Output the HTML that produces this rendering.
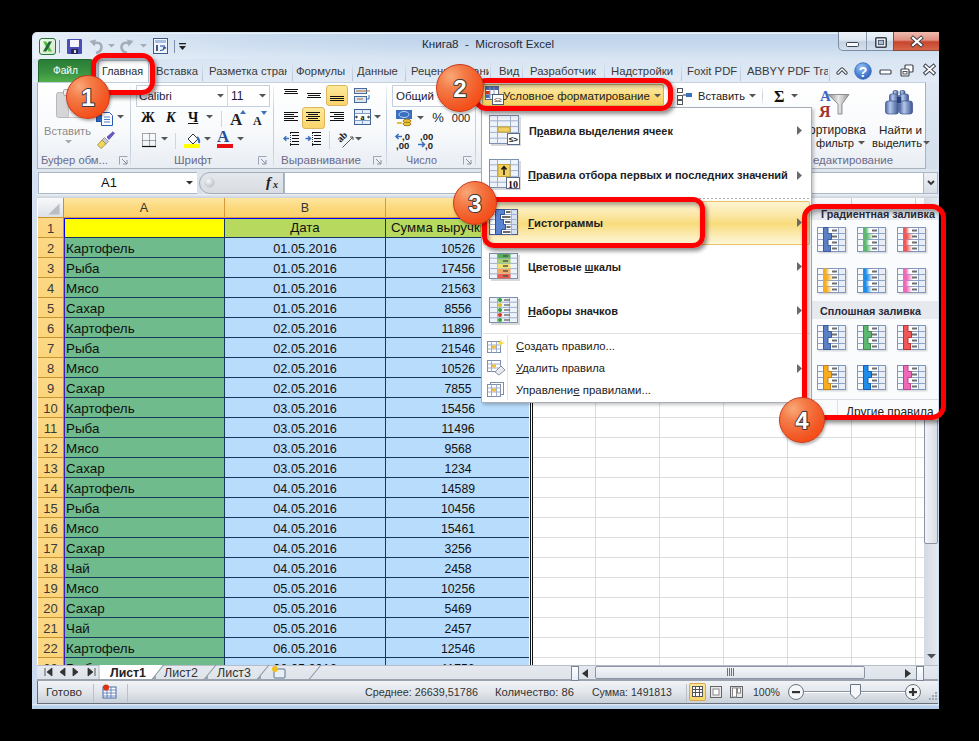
<!DOCTYPE html><html><head><meta charset="utf-8"><style>
*{margin:0;padding:0;box-sizing:border-box}
html,body{width:979px;height:741px;overflow:hidden;background:#000;font-family:"Liberation Sans",sans-serif;position:relative}
.a{position:absolute}
.t{position:absolute;white-space:nowrap;font-size:12px;color:#1e1e1e;line-height:14px}
svg{position:absolute;overflow:visible}
</style></head><body>
<div class="a" style="left:32px;top:32px;width:907px;height:677px;background:linear-gradient(#dae5f2,#d3dff0 30%,#c9d9ee);border-radius:5px 5px 0 0"></div>
<div class="a" style="left:33px;top:33px;width:905px;height:26px;background:linear-gradient(90deg,rgba(236,242,250,0.85) 0%,rgba(236,242,250,0.2) 25%,rgba(236,242,250,0) 40%,rgba(236,242,250,0) 100%),linear-gradient(#bdd3ea,#c6d9ed 45%,#d8e5f3);border-radius:4px 4px 0 0;border-top:1px solid #e8f0f8"></div>
<svg style="left:39px;top:38px" width="17" height="17" viewBox="0 0 17 17"><defs><linearGradient id="xl" x1="0" y1="0" x2="1" y2="1"><stop offset="0" stop-color="#f4fbf2"/><stop offset="1" stop-color="#cfe9c8"/></linearGradient></defs><rect x="0.5" y="0.5" width="16" height="16" rx="2.5" fill="url(#xl)" stroke="#1e7a34"/><path d="M4 3.5H7.5L13 13.5H9.5Z" fill="#5ab848"/><path d="M13 3.5H9.8L4 13.5H7.3Z" fill="#1f6a30"/></svg>
<div class="a" style="left:59px;top:40px;width:1px;height:13px;background:#8090a8"></div>
<svg style="left:67px;top:39px" width="15" height="15" viewBox="0 0 15 15"><rect x="0" y="0" width="15" height="15" rx="1" fill="#4a4fb8"/><rect x="3" y="1" width="9" height="7" fill="#f4f6fb"/><rect x="4" y="10" width="7" height="5" fill="#2a2a50"/><rect x="7" y="11" width="2" height="3" fill="#ddd"/></svg>
<svg style="left:89px;top:39px" width="14" height="15" viewBox="0 0 14 15"><path d="M4 4.5 Q12 2 12.5 8 Q12.5 12.5 7 14" stroke="#a4acb8" stroke-width="2.6" fill="none"/><path d="M0.5 2L7 0.5L5.5 7.5Z" fill="#a4acb8"/></svg>
<svg style="left:108px;top:44px" width="7" height="4" viewBox="0 0 7 4"><path d="M0 0H7L3.5 3.5Z" fill="#a4acb8"/></svg>
<svg style="left:120px;top:39px" width="14" height="15" viewBox="0 0 14 15"><path d="M10 4.5 Q2 2 1.5 8 Q1.5 12.5 7 14" stroke="#a4acb8" stroke-width="2.6" fill="none"/><path d="M13.5 2L7 0.5L8.5 7.5Z" fill="#a4acb8"/></svg>
<svg style="left:140px;top:44px" width="7" height="4" viewBox="0 0 7 4"><path d="M0 0H7L3.5 3.5Z" fill="#a4acb8"/></svg>
<svg style="left:153px;top:38px" width="15" height="16" viewBox="0 0 15 16"><rect x="0.5" y="0.5" width="14" height="15" fill="#f2f6fb" stroke="#3d5c8c"/><rect x="2" y="2" width="11" height="3" fill="#a8c0e0"/><rect x="3" y="7" width="2" height="6" fill="#3d5c8c"/><rect x="7" y="7" width="5" height="2" fill="#7d9cc8"/><path d="M7 12.5 Q11 12.5 11.5 9.5M10 10.5L11.5 9L13 10.5" stroke="#2050a0" fill="none" stroke-width="1.2"/></svg>
<div class="a" style="left:174px;top:40px;width:1px;height:13px;background:#8090a8"></div>
<svg style="left:178px;top:43px" width="9" height="9" viewBox="0 0 9 9"><rect x="1" y="0" width="7" height="1.3" fill="#222"/><path d="M1 3H8L4.5 7Z" fill="#222"/></svg>
<div class="t" style="left:422px;top:24px;height:40px;line-height:40px;font-size:11.61px;color:#1e2a3a">Книга8&nbsp; - &nbsp;Microsoft Excel</div>
<div class="a" style="left:838px;top:32px;width:101px;height:19px;border:1px solid #7d8ca3;border-top:none;border-radius:0 0 5px 5px;overflow:hidden;background:linear-gradient(#edf2f8,#dfe7f1 45%,#c3d1e2 55%,#d5e0ec)"></div>
<div class="a" style="left:866px;top:32px;width:1px;height:18px;background:#8a9ab0"></div>
<div class="a" style="left:893px;top:32px;width:46px;height:19px;background:linear-gradient(#eebcb0,#e09080 45%,#c8452c 55%,#d6664c);border-left:1px solid #8a4a3a;border-bottom:1px solid #8a4a3a"></div>
<svg style="left:846px;top:42px" width="13" height="6" viewBox="0 0 13 6"><rect x="0.5" y="0.5" width="12" height="4" rx="1" fill="#f8f9fb" stroke="#3c4350"/></svg>
<svg style="left:875px;top:37px" width="12" height="11" viewBox="0 0 12 11"><rect x="0.75" y="0.75" width="10.5" height="9.5" rx="1" fill="none" stroke="#3c4350" stroke-width="1.5"/><rect x="2.5" y="2.5" width="7" height="6" fill="none" stroke="#f8f9fb" stroke-width="1.2"/><rect x="3.3" y="3.3" width="5.4" height="4.4" fill="#a9bdd4" stroke="#3c4350" stroke-width="0.8"/></svg>
<svg style="left:910px;top:36px" width="14" height="11" viewBox="0 0 14 11"><path d="M3 2L11 9M11 2L3 9" stroke="#3a3f48" stroke-width="4" stroke-linecap="square"/><path d="M3 2L11 9M11 2L3 9" stroke="#fff" stroke-width="2.2" stroke-linecap="square"/></svg>
<div class="a" style="left:33px;top:59px;width:905px;height:23px;background:linear-gradient(#d9e5f3,#e2ebf6)"></div>
<div class="a" style="left:38px;top:59px;width:55px;height:23px;background:linear-gradient(#2a7c37,#3a9442 60%,#54b04c);border-radius:3px 3px 0 0;border:1px solid #1f6a2a;border-bottom:none"></div>
<div class="t" style="left:53px;top:51px;height:40px;line-height:40px;font-size:10.17px;color:#fff">Файл</div>
<div class="a" style="left:98px;top:60px;width:51px;height:23px;background:linear-gradient(#ffffff,#fafcfe);border:1px solid #b6c4d6;border-bottom:none;border-radius:3px 3px 0 0"></div>
<div class="t" style="left:102px;top:51px;height:40px;line-height:40px;font-size:10.77px;color:#2a2a2a">Главная</div>
<div class="a" style="left:150px;top:59px;width:680px;height:23px;overflow:hidden">
<div class="a" style="left:6px;top:0;width:45px;height:23px;overflow:hidden">
<div class="t" style="left:0;top:-8px;height:40px;line-height:40px;font-size:11.3px;color:#3a3a3a">Вставка</div>
</div>
<div class="a" style="left:52px;top:3px;width:1px;height:19px;background:linear-gradient(rgba(170,185,205,0),#b4c2d4)"></div>
<div class="a" style="left:59px;top:0;width:78px;height:23px;overflow:hidden">
<div class="t" style="left:0;top:-8px;height:40px;line-height:40px;font-size:11.3px;color:#3a3a3a">Разметка страницы</div>
</div>
<div class="a" style="left:142px;top:3px;width:1px;height:19px;background:linear-gradient(rgba(170,185,205,0),#b4c2d4)"></div>
<div class="a" style="left:146px;top:0;width:55px;height:23px;overflow:hidden">
<div class="t" style="left:0;top:-8px;height:40px;line-height:40px;font-size:11.3px;color:#3a3a3a">Формулы</div>
</div>
<div class="a" style="left:202px;top:3px;width:1px;height:19px;background:linear-gradient(rgba(170,185,205,0),#b4c2d4)"></div>
<div class="a" style="left:207px;top:0;width:47px;height:23px;overflow:hidden">
<div class="t" style="left:0;top:-8px;height:40px;line-height:40px;font-size:11.3px;color:#3a3a3a">Данные</div>
</div>
<div class="a" style="left:255px;top:3px;width:1px;height:19px;background:linear-gradient(rgba(170,185,205,0),#b4c2d4)"></div>
<div class="a" style="left:261px;top:0;width:78px;height:23px;overflow:hidden">
<div class="t" style="left:0;top:-8px;height:40px;line-height:40px;font-size:11.3px;color:#3a3a3a">Рецензирование</div>
</div>
<div class="a" style="left:340px;top:3px;width:1px;height:19px;background:linear-gradient(rgba(170,185,205,0),#b4c2d4)"></div>
<div class="a" style="left:349px;top:0;width:22px;height:23px;overflow:hidden">
<div class="t" style="left:0;top:-8px;height:40px;line-height:40px;font-size:11.3px;color:#3a3a3a">Вид</div>
</div>
<div class="a" style="left:372px;top:3px;width:1px;height:19px;background:linear-gradient(rgba(170,185,205,0),#b4c2d4)"></div>
<div class="a" style="left:380px;top:0;width:73px;height:23px;overflow:hidden">
<div class="t" style="left:0;top:-8px;height:40px;line-height:40px;font-size:11.3px;color:#3a3a3a">Разработчик</div>
</div>
<div class="a" style="left:454px;top:3px;width:1px;height:19px;background:linear-gradient(rgba(170,185,205,0),#b4c2d4)"></div>
<div class="a" style="left:461px;top:0;width:69px;height:23px;overflow:hidden">
<div class="t" style="left:0;top:-8px;height:40px;line-height:40px;font-size:11.3px;color:#3a3a3a">Надстройки</div>
</div>
<div class="a" style="left:531px;top:3px;width:1px;height:19px;background:linear-gradient(rgba(170,185,205,0),#b4c2d4)"></div>
<div class="a" style="left:537px;top:0;width:52px;height:23px;overflow:hidden">
<div class="t" style="left:0;top:-8px;height:40px;line-height:40px;font-size:11.3px;color:#3a3a3a">Foxit PDF</div>
</div>
<div class="a" style="left:590px;top:3px;width:1px;height:19px;background:linear-gradient(rgba(170,185,205,0),#b4c2d4)"></div>
<div class="a" style="left:597px;top:0;width:81px;height:23px;overflow:hidden">
<div class="t" style="left:0;top:-8px;height:40px;line-height:40px;font-size:11.3px;color:#3a3a3a">ABBYY PDF Trar</div>
</div>
<div class="a" style="left:679px;top:3px;width:1px;height:19px;background:linear-gradient(rgba(170,185,205,0),#b4c2d4)"></div>
</div>
<svg style="left:836px;top:66px" width="12" height="9" viewBox="0 0 12 9"><path d="M2 7L6 3L10 7" stroke="#404650" stroke-width="3.4" fill="none" stroke-linejoin="round" stroke-linecap="round"/><path d="M2 7L6 3L10 7" stroke="#fff" stroke-width="1.4" fill="none" stroke-linejoin="round" stroke-linecap="round"/></svg>
<svg style="left:854px;top:62px" width="18" height="18" viewBox="0 0 18 18"><defs><radialGradient id="hq" cx="0.4" cy="0.3" r="0.75"><stop offset="0" stop-color="#9cc4f4"/><stop offset="0.6" stop-color="#4a84d8"/><stop offset="1" stop-color="#2a5cb8"/></radialGradient></defs><circle cx="9" cy="9" r="8.3" fill="url(#hq)" stroke="#3a6ab8" stroke-width="0.8"/><text x="9" y="14.5" font-family="Liberation Sans" font-weight="bold" font-size="14" fill="#fff" text-anchor="middle">?</text></svg>
<svg style="left:879px;top:69px" width="13" height="6" viewBox="0 0 13 6"><rect x="1" y="1" width="11" height="4" rx="1" fill="#fff" stroke="#404650" stroke-width="1.2"/></svg>
<svg style="left:900px;top:64px" width="14" height="13" viewBox="0 0 14 13"><rect x="5" y="1" width="8" height="7" rx="1" fill="#fff" stroke="#404650" stroke-width="1.2"/><rect x="1" y="5" width="8" height="7" rx="1" fill="#fff" stroke="#404650" stroke-width="1.2"/><rect x="3" y="7.5" width="4" height="2.5" fill="none" stroke="#404650" stroke-width="0.9"/></svg>
<svg style="left:923px;top:64px" width="13" height="11" viewBox="0 0 13 11"><path d="M2.5 2L10.5 9M10.5 2L2.5 9" stroke="#404650" stroke-width="3.8" stroke-linecap="square"/><path d="M2.5 2L10.5 9M10.5 2L2.5 9" stroke="#fff" stroke-width="1.8" stroke-linecap="square"/></svg>
<div class="a" style="left:37px;top:82px;width:889px;height:87px;background:linear-gradient(#ffffff,#f8fafc 55%,#e8edf3);border:1px solid #a7b2bf;border-top:1px solid #c2d0e0"></div>
<div class="a" style="left:926px;top:82px;width:12px;height:87px;background:linear-gradient(#dfe8f3,#d4dfec)"></div>
<div class="a" style="left:130px;top:86px;width:1px;height:80px;background:linear-gradient(rgba(190,200,215,0.2),#c5d0dd 30%,#c5d0dd 80%,rgba(190,200,215,0.4))"></div>
<div class="a" style="left:273px;top:86px;width:1px;height:80px;background:linear-gradient(rgba(190,200,215,0.2),#c5d0dd 30%,#c5d0dd 80%,rgba(190,200,215,0.4))"></div>
<div class="a" style="left:386px;top:86px;width:1px;height:80px;background:linear-gradient(rgba(190,200,215,0.2),#c5d0dd 30%,#c5d0dd 80%,rgba(190,200,215,0.4))"></div>
<div class="a" style="left:475px;top:86px;width:1px;height:80px;background:linear-gradient(rgba(190,200,215,0.2),#c5d0dd 30%,#c5d0dd 80%,rgba(190,200,215,0.4))"></div>
<svg style="left:55px;top:88px" width="38" height="30" viewBox="0 0 38 30"><rect x="1.5" y="4.5" width="25" height="25" rx="2" fill="#d6d6d8" stroke="#b8b8bc"/><rect x="8.5" y="1.5" width="11" height="6" rx="1.5" fill="#ececee" stroke="#a8a8ac"/><path d="M13.5 11.5H30.5L34.5 15.5V29.5H13.5Z" fill="#f4f4f6" stroke="#c4c4c8"/><path d="M16 16H31M16 19H31M16 22H31M16 25H31" stroke="#dcdce0"/></svg>
<div class="t" style="left:44px;top:111px;height:40px;line-height:40px;font-size:11.09px;color:#8c8c8c">Вставить</div>
<svg style="left:65px;top:140px" width="7" height="4" viewBox="0 0 7 4"><path d="M0 0H7L3.5 3.5Z" fill="#a8a8a8"/></svg>
<svg style="left:96px;top:112px" width="17" height="14" viewBox="0 0 17 14"><rect x="0.5" y="3.5" width="8" height="6" fill="#2f6fd0" stroke="#1f4fa0"/><path d="M5.5 0.5H13.5L16.5 3.5V13.5H5.5Z" fill="#fff" stroke="#2a5cb0"/><path d="M8 5H14M8 7.5H14M8 10H14" stroke="#4a80d0" stroke-width="1.2"/></svg>
<svg style="left:117px;top:115px" width="7" height="4" viewBox="0 0 7 4"><path d="M0 0H7L3.5 3.5Z" fill="#555"/></svg>
<svg style="left:97px;top:131px" width="18" height="18" viewBox="0 0 18 18"><path d="M10 6L16 0.8L17.5 2.3L12 8.5Z" fill="#6a5ac8" stroke="#3a2a90" stroke-width="0.6"/><path d="M7.5 6.5L11.5 10.5L9 13L5 9Z" fill="#c8c8d8" stroke="#707080" stroke-width="0.6"/><path d="M5 9L9 13L4 17.5L0.5 14Z" fill="#f0d860" stroke="#a08828" stroke-width="0.8"/></svg>
<div class="t" style="left:41px;top:140px;height:40px;line-height:40px;font-size:11.23px;color:#6a6a8a">Буфер обм...</div>
<svg style="left:119px;top:156px" width="9" height="9" viewBox="0 0 9 9"><path d="M0.5 8.5V0.5H8.5" stroke="#9aa5b5" fill="none"/><path d="M3 3L8 8M8 4V8H4" stroke="#8590a0" fill="none"/></svg>
<div class="a" style="left:136px;top:85px;width:134px;height:22px;background:#fff;border:1px solid #c5d0de"></div>
<div class="a" style="left:227px;top:86px;width:1px;height:20px;background:#d0d8e3"></div>
<div class="t" style="left:139px;top:76px;height:40px;line-height:40px;font-size:11.64px;color:#1a1a3a">Calibri</div>
<svg style="left:217px;top:94px" width="7" height="4" viewBox="0 0 7 4"><path d="M0 0H7L3.5 3.5Z" fill="#555"/></svg>
<div class="t" style="left:231px;top:84px;height:24px;line-height:24px;font-size:12px;color:#1a1a3a">11</div>
<svg style="left:259px;top:94px" width="7" height="4" viewBox="0 0 7 4"><path d="M0 0H7L3.5 3.5Z" fill="#555"/></svg>
<div class="t" style="left:141px;top:104px;height:28px;line-height:28px;font-size:14px;font-weight:bold;font-family:'Liberation Serif';color:#111">Ж</div>
<div class="t" style="left:166px;top:104px;height:28px;line-height:28px;font-size:14px;font-weight:bold;font-style:italic;font-family:'Liberation Serif';color:#111">К</div>
<div class="t" style="left:188px;top:104px;height:28px;line-height:28px;font-size:14px;font-weight:bold;font-family:'Liberation Serif';color:#111"><u>Ч</u></div>
<svg style="left:206px;top:115px" width="7" height="4" viewBox="0 0 7 4"><path d="M0 0H7L3.5 3.5Z" fill="#555"/></svg>
<div class="a" style="left:221px;top:111px;width:1px;height:16px;background:#d0d6de"></div>
<div class="t" style="left:230px;top:103px;height:34px;line-height:34px;font-size:17px;font-weight:bold;font-family:'Liberation Serif';color:#222">A</div>
<svg style="left:240px;top:110px" width="6" height="4" viewBox="0 0 6 4"><path d="M0 4L3 0L6 4Z" fill="#3a6fc0"/></svg>
<div class="t" style="left:253px;top:109px;height:24px;line-height:24px;font-size:12px;font-weight:bold;font-family:'Liberation Serif';color:#222">A</div>
<svg style="left:261px;top:111px" width="6" height="4" viewBox="0 0 6 4"><path d="M0 0H6L3 4Z" fill="#3a6fc0"/></svg>
<svg style="left:142px;top:133px" width="14" height="14" viewBox="0 0 14 14"><path d="M0.5 0.5H13.5V13.5H0.5ZM7.5 0.5V13.5M0.5 7.5H13.5" stroke="#555" stroke-dasharray="1 1" fill="none"/><path d="M0 13.5H14" stroke="#111" stroke-width="1.2"/></svg>
<svg style="left:161px;top:137px" width="7" height="4" viewBox="0 0 7 4"><path d="M0 0H7L3.5 3.5Z" fill="#555"/></svg>
<div class="a" style="left:175px;top:133px;width:1px;height:16px;background:#d0d6de"></div>
<svg style="left:184px;top:132px" width="17" height="17" viewBox="0 0 17 17"><path d="M4 7L9 2L14 7L9 12Z" fill="#fff" stroke="#333"/><path d="M13 5Q16 8 15 11" stroke="#3a6fc0" stroke-width="2" fill="none"/><rect x="0" y="12" width="16" height="4" fill="#ffff00"/></svg>
<svg style="left:204px;top:137px" width="7" height="4" viewBox="0 0 7 4"><path d="M0 0H7L3.5 3.5Z" fill="#555"/></svg>
<div class="t" style="left:217px;top:120px;height:34px;line-height:34px;font-size:17px;font-weight:bold;font-family:'Liberation Serif';color:#2050a0">A</div>
<div class="a" style="left:217px;top:144px;width:16px;height:4px;background:#e81010"></div>
<svg style="left:237px;top:137px" width="7" height="4" viewBox="0 0 7 4"><path d="M0 0H7L3.5 3.5Z" fill="#555"/></svg>
<div class="t" style="left:174px;top:140px;height:40px;line-height:40px;font-size:11.55px;color:#6a6a8a">Шрифт</div>
<svg style="left:258px;top:156px" width="9" height="9" viewBox="0 0 9 9"><path d="M0.5 8.5V0.5H8.5" stroke="#9aa5b5" fill="none"/><path d="M3 3L8 8M8 4V8H4" stroke="#8590a0" fill="none"/></svg>
<svg style="left:284px;top:89px" width="15" height="6" viewBox="0 0 15 6"><rect x="0" y="0" width="14" height="1" fill="#111"/><rect x="1" y="2" width="12" height="1" fill="#111"/><rect x="0" y="4" width="14" height="1" fill="#111"/></svg>
<svg style="left:307px;top:93px" width="15" height="6" viewBox="0 0 15 6"><rect x="0" y="0" width="14" height="1" fill="#111"/><rect x="1" y="2" width="12" height="1" fill="#111"/><rect x="0" y="4" width="14" height="1" fill="#111"/></svg>
<div class="a" style="left:326px;top:85px;width:22px;height:21px;background:linear-gradient(#fde99a,#fbd46c);border:1px solid #dcb55c;border-radius:3px"></div>
<svg style="left:330px;top:96px" width="15" height="6" viewBox="0 0 15 6"><rect x="0" y="0" width="14" height="1" fill="#111"/><rect x="0" y="2" width="14" height="1" fill="#111"/><rect x="0" y="4" width="14" height="1" fill="#111"/></svg>
<svg style="left:354px;top:88px" width="17" height="16" viewBox="0 0 17 16"><rect x="0.5" y="0.5" width="12" height="5" fill="#dbe6f4" stroke="#4a6a9a"/><rect x="0.5" y="8.5" width="12" height="6" fill="#dbe6f4" stroke="#4a6a9a"/><path d="M2 3H16M3 11H9" stroke="#a86a30"/><path d="M15 7V11H12" stroke="#3a6fc0" fill="none"/></svg>
<svg style="left:284px;top:112px" width="15" height="10" viewBox="0 0 15 10"><rect x="0" y="0" width="14" height="1" fill="#111"/><rect x="0" y="2" width="10" height="1" fill="#111"/><rect x="0" y="4" width="14" height="1" fill="#111"/><rect x="0" y="6" width="10" height="1" fill="#111"/><rect x="0" y="8" width="14" height="1" fill="#111"/></svg>
<div class="a" style="left:302px;top:107px;width:23px;height:22px;background:linear-gradient(#fde99a,#fbd46c);border:1px solid #dcb55c;border-radius:3px"></div>
<svg style="left:306px;top:112px" width="15" height="10" viewBox="0 0 15 10"><rect x="0" y="0" width="14" height="1" fill="#111"/><rect x="2" y="2" width="10" height="1" fill="#111"/><rect x="0" y="4" width="14" height="1" fill="#111"/><rect x="2" y="6" width="10" height="1" fill="#111"/><rect x="0" y="8" width="14" height="1" fill="#111"/></svg>
<svg style="left:330px;top:112px" width="15" height="10" viewBox="0 0 15 10"><rect x="0" y="0" width="14" height="1" fill="#111"/><rect x="4" y="2" width="10" height="1" fill="#111"/><rect x="0" y="4" width="14" height="1" fill="#111"/><rect x="4" y="6" width="10" height="1" fill="#111"/><rect x="0" y="8" width="14" height="1" fill="#111"/></svg>
<svg style="left:354px;top:109px" width="17" height="16" viewBox="0 0 17 16"><rect x="0.5" y="0.5" width="16" height="15" fill="#e6eef8" stroke="#3f5f92"/><path d="M0.5 4.5H16.5M0.5 11.5H16.5M8.5 0.5V4.5M8.5 11.5V15.5" stroke="#7f9cc8"/><rect x="1" y="5" width="15" height="6" fill="#fff"/><text x="8.5" y="10.5" font-size="8" font-weight="bold" text-anchor="middle" font-family="Liberation Serif" fill="#111">a</text><path d="M1.5 8H4M3 6.8L1.5 8L3 9.2M15.5 8H13M14 6.8L15.5 8L14 9.2" stroke="#222" stroke-width="0.9" fill="none"/></svg>
<svg style="left:374px;top:115px" width="7" height="4" viewBox="0 0 7 4"><path d="M0 0H7L3.5 3.5Z" fill="#555"/></svg>
<svg style="left:283px;top:132px" width="17" height="15" viewBox="0 0 17 15"><path d="M7 0.5H16M9 3.5H16M9 6.5H16M9 9.5H16M7 12.5H16" stroke="#111"/><path d="M7.5 1V14" stroke="#333" stroke-dasharray="1 1"/><path d="M1 6.5H6M3.3 4.3L1 6.5L3.3 8.7" stroke="#3a6fc0" stroke-width="1.4" fill="none"/></svg>
<svg style="left:305px;top:132px" width="17" height="15" viewBox="0 0 17 15"><path d="M7 0.5H16M9 3.5H16M9 6.5H16M9 9.5H16M7 12.5H16" stroke="#111"/><path d="M7.5 1V14" stroke="#333" stroke-dasharray="1 1"/><path d="M0.5 6.5H5.5M3.2 4.3L5.5 6.5L3.2 8.7" stroke="#3a6fc0" stroke-width="1.4" fill="none"/></svg>
<div class="a" style="left:329px;top:131px;width:1px;height:18px;background:#d0d6de"></div>
<svg style="left:337px;top:131px" width="20" height="18" viewBox="0 0 20 18"><text x="0" y="0" font-size="10" font-family="Liberation Serif" font-weight="bold" transform="translate(3.5 12) rotate(-45)" fill="#222">ab</text><path d="M5.5 16.5L16 6M13 6H16V9" stroke="#555" fill="none" stroke-width="1"/></svg>
<svg style="left:355px;top:137px" width="7" height="4" viewBox="0 0 7 4"><path d="M0 0H7L3.5 3.5Z" fill="#555"/></svg>
<div class="t" style="left:281px;top:140px;height:40px;line-height:40px;font-size:11.62px;color:#6a6a8a">Выравнивание</div>
<svg style="left:373px;top:156px" width="9" height="9" viewBox="0 0 9 9"><path d="M0.5 8.5V0.5H8.5" stroke="#9aa5b5" fill="none"/><path d="M3 3L8 8M8 4V8H4" stroke="#8590a0" fill="none"/></svg>
<div class="a" style="left:392px;top:85px;width:88px;height:22px;background:#fff;border:1px solid #c5d0de"></div>
<div class="t" style="left:396px;top:76px;height:40px;line-height:40px;font-size:11.55px;color:#1a1a3a">Общий</div>
<svg style="left:396px;top:110px" width="17" height="17" viewBox="0 0 17 17"><rect x="0" y="0" width="16" height="9" fill="#3a6fc0"/><ellipse cx="8" cy="4.5" rx="5" ry="3" fill="none" stroke="#c0d8f0"/><ellipse cx="11" cy="11" rx="4" ry="1.8" fill="#e8c030" stroke="#a08020"/><ellipse cx="11" cy="14" rx="4" ry="1.8" fill="#e8c030" stroke="#a08020"/><rect x="1" y="12" width="5" height="2" fill="#e8c030"/></svg>
<svg style="left:417px;top:116px" width="7" height="4" viewBox="0 0 7 4"><path d="M0 0H7L3.5 3.5Z" fill="#555"/></svg>
<div class="t" style="left:238px;top:105px;width:400px;height:26px;line-height:26px;text-align:center;font-size:13px;color:#222">%</div>
<div class="t" style="left:261px;top:107px;width:400px;height:22px;line-height:22px;text-align:center;font-size:11px;color:#222">000</div>
<svg style="left:395px;top:132px" width="42" height="18" viewBox="0 0 42 18"><g font-size="9.5" font-weight="bold" font-family="Liberation Sans" fill="#222"><text x="7" y="8">,0</text><text x="1" y="16.5">,00</text><text x="25" y="8">,00</text><text x="30" y="16.5">,0</text></g><path d="M1 4.5H7M3.5 2L1 4.5L3.5 7" stroke="#3a6fc0" stroke-width="1.6" fill="none"/><path d="M23 12.5H29.5M27 10L29.5 12.5L27 15" stroke="#3a6fc0" stroke-width="1.6" fill="none"/></svg>
<div class="t" style="left:406px;top:140px;height:40px;line-height:40px;font-size:10.78px;color:#6a6a8a">Число</div>
<svg style="left:463px;top:156px" width="9" height="9" viewBox="0 0 9 9"><path d="M0.5 8.5V0.5H8.5" stroke="#9aa5b5" fill="none"/><path d="M3 3L8 8M8 4V8H4" stroke="#8590a0" fill="none"/></svg>
<svg style="left:677px;top:88px" width="16" height="18" viewBox="0 0 16 18"><rect x="0.5" y="0.5" width="5" height="4" fill="#fff" stroke="#555"/><rect x="0.5" y="7.5" width="5" height="4" fill="#fff" stroke="#555"/><rect x="0.5" y="12.5" width="5" height="4" fill="#fff" stroke="#555"/><rect x="9" y="5" width="6" height="4" fill="#3a6fc0"/><path d="M6 7H9" stroke="#333"/></svg>
<div class="t" style="left:698px;top:76px;height:40px;line-height:40px;font-size:11.09px;color:#222">Вставить</div>
<svg style="left:749px;top:94px" width="7" height="4" viewBox="0 0 7 4"><path d="M0 0H7L3.5 3.5Z" fill="#555"/></svg>
<div class="t" style="left:774px;top:81px;height:32px;line-height:32px;font-size:16px;font-weight:bold;font-family:'Liberation Serif';color:#111">Σ</div>
<div class="a" style="left:762px;top:86px;width:1px;height:20px;background:linear-gradient(rgba(200,208,218,0),#cdd4de 40%,#cdd4de 60%,rgba(200,208,218,0))"></div>
<svg style="left:791px;top:94px" width="7" height="4" viewBox="0 0 7 4"><path d="M0 0H7L3.5 3.5Z" fill="#555"/></svg>
<svg style="left:818px;top:88px" width="34" height="30" viewBox="0 0 34 30"><defs><linearGradient id="fun" x1="0" x2="1"><stop offset="0" stop-color="#8a8a8a"/><stop offset="0.5" stop-color="#e8e8e8"/><stop offset="1" stop-color="#9a9a9a"/></linearGradient></defs><path d="M10 6.5H31L24 16V26H20V16Z" fill="url(#fun)" stroke="#7a7a7a" stroke-width="0.8"/><text x="2" y="13" font-family="Liberation Serif" font-weight="bold" font-size="15" fill="#3a66c8">A</text><text x="1" y="29" font-family="Liberation Serif" font-weight="bold" font-size="16" fill="#a0342a">Я</text></svg>
<div class="t" style="left:809px;top:110px;height:40px;line-height:40px;font-size:11.96px;color:#222">ортировка</div>
<div class="t" style="left:816px;top:123px;height:40px;line-height:40px;font-size:11.11px;color:#222">фильтр</div>
<svg style="left:858px;top:141px" width="7" height="4" viewBox="0 0 7 4"><path d="M0 0H7L3.5 3.5Z" fill="#555"/></svg>
<svg style="left:885px;top:90px" width="29" height="25" viewBox="0 0 29 25"><defs><linearGradient id="bino" x1="0" x2="1"><stop offset="0" stop-color="#4a66a0"/><stop offset="0.35" stop-color="#b4c8ec"/><stop offset="1" stop-color="#3a5490"/></linearGradient></defs><g fill="url(#bino)" stroke="#3a5088" stroke-width="0.7"><rect x="8" y="0.5" width="5" height="4" rx="1.5"/><rect x="15" y="0.5" width="5" height="4" rx="1.5"/><rect x="4.5" y="4" width="9" height="8" rx="2"/><rect x="14.5" y="4" width="9" height="8" rx="2"/><rect x="0.5" y="11" width="13" height="13" rx="2.5"/><rect x="14.5" y="11" width="13" height="13" rx="2.5"/></g><rect x="12" y="7" width="4" height="6" fill="#2a4078"/></svg>
<div class="t" style="left:879px;top:110px;height:40px;line-height:40px;font-size:11.65px;color:#222">Найти и</div>
<div class="t" style="left:872px;top:123px;height:40px;line-height:40px;font-size:11.17px;color:#222">выделить</div>
<svg style="left:923px;top:141px" width="7" height="4" viewBox="0 0 7 4"><path d="M0 0H7L3.5 3.5Z" fill="#555"/></svg>
<div class="t" style="left:813px;top:140px;height:40px;line-height:40px;font-size:11.44px;color:#6a6a8a">едактирование</div>
<div class="a" style="left:37px;top:169px;width:901px;height:29px;background:linear-gradient(#dfe5ec,#d8dfe8)"></div>
<div class="a" style="left:38px;top:172px;width:159px;height:22px;background:#fff;border:1px solid #a9b7c8;border-right:none"></div>
<div class="t" style="left:-91px;top:170px;width:400px;height:26px;line-height:26px;text-align:center;font-size:13px;color:#111">A1</div>
<svg style="left:186px;top:181px" width="7" height="4" viewBox="0 0 7 4"><path d="M0 0H7L3.5 3.5Z" fill="#333"/></svg>
<div class="a" style="left:199px;top:172px;width:85px;height:22px;background:linear-gradient(#e4e7eb,#d9dde2);border:1px solid #a3acb8;border-radius:11px 0 0 11px"></div>
<svg style="left:204px;top:177px" width="11" height="11" viewBox="0 0 11 11"><defs><radialGradient id="fcirc" cx="0.4" cy="0.35" r="0.7"><stop offset="0" stop-color="#f8f9fa"/><stop offset="1" stop-color="#b9bec6"/></radialGradient></defs><circle cx="5.5" cy="5.5" r="5" fill="url(#fcirc)"/></svg>
<svg style="left:265px;top:175px" width="18" height="16" viewBox="0 0 18 16"><text x="1" y="12" font-family="Liberation Serif" font-style="italic" font-weight="bold" font-size="15" fill="#222">f</text><text x="8" y="13" font-family="Liberation Serif" font-style="italic" font-weight="bold" font-size="10" fill="#222">x</text></svg>
<div class="a" style="left:284px;top:172px;width:640px;height:22px;background:#fff;border:1px solid #a9b7c8"></div>
<div class="a" style="left:924px;top:172px;width:14px;height:22px;background:linear-gradient(#eef2f6,#d8dee6);border:1px solid #a9b7c8;border-left:none"></div>
<svg style="left:927px;top:180px" width="8" height="6" viewBox="0 0 8 6"><path d="M1 1L4 4L7 1" stroke="#333" stroke-width="1.8" fill="none"/></svg>
<div class="a" style="left:37px;top:194px;width:901px;height:4px;background:linear-gradient(#eef1f5,#c9d1db)"></div>
<div class="a" style="left:37px;top:198px;width:887px;height:467px;background:#fff"></div>
<div class="a" style="left:38px;top:198px;width:26px;height:20px;background:linear-gradient(#f8f9fa,#dde1e6);border-right:1px solid #c8922e;border-bottom:1px solid #c8922e"></div>
<svg style="left:48px;top:203px" width="12" height="12" viewBox="0 0 12 12"><path d="M11.5 0.5V11.5H0.5Z" fill="#b9bec5"/></svg>
<div class="a" style="left:64px;top:198px;width:161px;height:20px;background:linear-gradient(#fde6a0,#fcd97e 50%,#fbd06a);border-right:1px solid #d49a3c;border-bottom:1px solid #d49a3c"></div>
<div class="t" style="left:-56px;top:188px;width:400px;height:40px;line-height:40px;text-align:center;font-size:12.5px;color:#333">A</div>
<div class="a" style="left:225px;top:198px;width:161px;height:20px;background:linear-gradient(#fde6a0,#fcd97e 50%,#fbd06a);border-right:1px solid #d49a3c;border-bottom:1px solid #d49a3c"></div>
<div class="t" style="left:105px;top:188px;width:400px;height:40px;line-height:40px;text-align:center;font-size:12.5px;color:#333">B</div>
<div class="a" style="left:386px;top:198px;width:147px;height:20px;background:linear-gradient(#fde6a0,#fcd97e 50%,#fbd06a);border-right:1px solid #d49a3c;border-bottom:1px solid #d49a3c"></div>
<div class="t" style="left:259px;top:188px;width:400px;height:40px;line-height:40px;text-align:center;font-size:12.5px;color:#333">C</div>
<div class="a" style="left:533px;top:198px;width:63px;height:20px;background:linear-gradient(#f9fafb,#e4e7eb);border-right:1px solid #c5cbd3;border-bottom:1px solid #c5cbd3"></div>
<div class="a" style="left:596px;top:198px;width:64px;height:20px;background:linear-gradient(#f9fafb,#e4e7eb);border-right:1px solid #c5cbd3;border-bottom:1px solid #c5cbd3"></div>
<div class="a" style="left:660px;top:198px;width:64px;height:20px;background:linear-gradient(#f9fafb,#e4e7eb);border-right:1px solid #c5cbd3;border-bottom:1px solid #c5cbd3"></div>
<div class="a" style="left:724px;top:198px;width:64px;height:20px;background:linear-gradient(#f9fafb,#e4e7eb);border-right:1px solid #c5cbd3;border-bottom:1px solid #c5cbd3"></div>
<div class="a" style="left:788px;top:198px;width:64px;height:20px;background:linear-gradient(#f9fafb,#e4e7eb);border-right:1px solid #c5cbd3;border-bottom:1px solid #c5cbd3"></div>
<div class="a" style="left:852px;top:198px;width:64px;height:20px;background:linear-gradient(#f9fafb,#e4e7eb);border-right:1px solid #c5cbd3;border-bottom:1px solid #c5cbd3"></div>
<div class="a" style="left:916px;top:198px;width:9px;height:20px;background:linear-gradient(#f9fafb,#e4e7eb);border-right:1px solid #c5cbd3;border-bottom:1px solid #c5cbd3"></div>
<div class="a" style="left:0;top:0;width:979px;height:665px;overflow:hidden">
<div class="a" style="left:38px;top:218px;width:26px;height:20px;background:linear-gradient(#fdd986,#fcd47a);border-right:1px solid #c8922e;border-bottom:1px solid #c8922e"><div class="t" style="left:0;top:0;width:25px;height:19px;line-height:22px;text-align:center;font-size:13px;color:#3a3a3a">1</div></div>
<div class="a" style="left:38px;top:238px;width:26px;height:20px;background:linear-gradient(#fdd986,#fcd47a);border-right:1px solid #c8922e;border-bottom:1px solid #c8922e"><div class="t" style="left:0;top:0;width:25px;height:19px;line-height:22px;text-align:center;font-size:13px;color:#3a3a3a">2</div></div>
<div class="a" style="left:38px;top:258px;width:26px;height:20px;background:linear-gradient(#fdd986,#fcd47a);border-right:1px solid #c8922e;border-bottom:1px solid #c8922e"><div class="t" style="left:0;top:0;width:25px;height:19px;line-height:22px;text-align:center;font-size:13px;color:#3a3a3a">3</div></div>
<div class="a" style="left:38px;top:278px;width:26px;height:20px;background:linear-gradient(#fdd986,#fcd47a);border-right:1px solid #c8922e;border-bottom:1px solid #c8922e"><div class="t" style="left:0;top:0;width:25px;height:19px;line-height:22px;text-align:center;font-size:13px;color:#3a3a3a">4</div></div>
<div class="a" style="left:38px;top:298px;width:26px;height:20px;background:linear-gradient(#fdd986,#fcd47a);border-right:1px solid #c8922e;border-bottom:1px solid #c8922e"><div class="t" style="left:0;top:0;width:25px;height:19px;line-height:22px;text-align:center;font-size:13px;color:#3a3a3a">5</div></div>
<div class="a" style="left:38px;top:318px;width:26px;height:20px;background:linear-gradient(#fdd986,#fcd47a);border-right:1px solid #c8922e;border-bottom:1px solid #c8922e"><div class="t" style="left:0;top:0;width:25px;height:19px;line-height:22px;text-align:center;font-size:13px;color:#3a3a3a">6</div></div>
<div class="a" style="left:38px;top:338px;width:26px;height:20px;background:linear-gradient(#fdd986,#fcd47a);border-right:1px solid #c8922e;border-bottom:1px solid #c8922e"><div class="t" style="left:0;top:0;width:25px;height:19px;line-height:22px;text-align:center;font-size:13px;color:#3a3a3a">7</div></div>
<div class="a" style="left:38px;top:358px;width:26px;height:20px;background:linear-gradient(#fdd986,#fcd47a);border-right:1px solid #c8922e;border-bottom:1px solid #c8922e"><div class="t" style="left:0;top:0;width:25px;height:19px;line-height:22px;text-align:center;font-size:13px;color:#3a3a3a">8</div></div>
<div class="a" style="left:38px;top:378px;width:26px;height:20px;background:linear-gradient(#fdd986,#fcd47a);border-right:1px solid #c8922e;border-bottom:1px solid #c8922e"><div class="t" style="left:0;top:0;width:25px;height:19px;line-height:22px;text-align:center;font-size:13px;color:#3a3a3a">9</div></div>
<div class="a" style="left:38px;top:398px;width:26px;height:20px;background:linear-gradient(#fdd986,#fcd47a);border-right:1px solid #c8922e;border-bottom:1px solid #c8922e"><div class="t" style="left:0;top:0;width:25px;height:19px;line-height:22px;text-align:center;font-size:13px;color:#3a3a3a">10</div></div>
<div class="a" style="left:38px;top:418px;width:26px;height:20px;background:linear-gradient(#fdd986,#fcd47a);border-right:1px solid #c8922e;border-bottom:1px solid #c8922e"><div class="t" style="left:0;top:0;width:25px;height:19px;line-height:22px;text-align:center;font-size:13px;color:#3a3a3a">11</div></div>
<div class="a" style="left:38px;top:438px;width:26px;height:20px;background:linear-gradient(#fdd986,#fcd47a);border-right:1px solid #c8922e;border-bottom:1px solid #c8922e"><div class="t" style="left:0;top:0;width:25px;height:19px;line-height:22px;text-align:center;font-size:13px;color:#3a3a3a">12</div></div>
<div class="a" style="left:38px;top:458px;width:26px;height:20px;background:linear-gradient(#fdd986,#fcd47a);border-right:1px solid #c8922e;border-bottom:1px solid #c8922e"><div class="t" style="left:0;top:0;width:25px;height:19px;line-height:22px;text-align:center;font-size:13px;color:#3a3a3a">13</div></div>
<div class="a" style="left:38px;top:478px;width:26px;height:20px;background:linear-gradient(#fdd986,#fcd47a);border-right:1px solid #c8922e;border-bottom:1px solid #c8922e"><div class="t" style="left:0;top:0;width:25px;height:19px;line-height:22px;text-align:center;font-size:13px;color:#3a3a3a">14</div></div>
<div class="a" style="left:38px;top:498px;width:26px;height:20px;background:linear-gradient(#fdd986,#fcd47a);border-right:1px solid #c8922e;border-bottom:1px solid #c8922e"><div class="t" style="left:0;top:0;width:25px;height:19px;line-height:22px;text-align:center;font-size:13px;color:#3a3a3a">15</div></div>
<div class="a" style="left:38px;top:518px;width:26px;height:20px;background:linear-gradient(#fdd986,#fcd47a);border-right:1px solid #c8922e;border-bottom:1px solid #c8922e"><div class="t" style="left:0;top:0;width:25px;height:19px;line-height:22px;text-align:center;font-size:13px;color:#3a3a3a">16</div></div>
<div class="a" style="left:38px;top:538px;width:26px;height:20px;background:linear-gradient(#fdd986,#fcd47a);border-right:1px solid #c8922e;border-bottom:1px solid #c8922e"><div class="t" style="left:0;top:0;width:25px;height:19px;line-height:22px;text-align:center;font-size:13px;color:#3a3a3a">17</div></div>
<div class="a" style="left:38px;top:558px;width:26px;height:20px;background:linear-gradient(#fdd986,#fcd47a);border-right:1px solid #c8922e;border-bottom:1px solid #c8922e"><div class="t" style="left:0;top:0;width:25px;height:19px;line-height:22px;text-align:center;font-size:13px;color:#3a3a3a">18</div></div>
<div class="a" style="left:38px;top:578px;width:26px;height:20px;background:linear-gradient(#fdd986,#fcd47a);border-right:1px solid #c8922e;border-bottom:1px solid #c8922e"><div class="t" style="left:0;top:0;width:25px;height:19px;line-height:22px;text-align:center;font-size:13px;color:#3a3a3a">19</div></div>
<div class="a" style="left:38px;top:598px;width:26px;height:20px;background:linear-gradient(#fdd986,#fcd47a);border-right:1px solid #c8922e;border-bottom:1px solid #c8922e"><div class="t" style="left:0;top:0;width:25px;height:19px;line-height:22px;text-align:center;font-size:13px;color:#3a3a3a">20</div></div>
<div class="a" style="left:38px;top:618px;width:26px;height:20px;background:linear-gradient(#fdd986,#fcd47a);border-right:1px solid #c8922e;border-bottom:1px solid #c8922e"><div class="t" style="left:0;top:0;width:25px;height:19px;line-height:22px;text-align:center;font-size:13px;color:#3a3a3a">21</div></div>
<div class="a" style="left:38px;top:638px;width:26px;height:20px;background:linear-gradient(#fdd986,#fcd47a);border-right:1px solid #c8922e;border-bottom:1px solid #c8922e"><div class="t" style="left:0;top:0;width:25px;height:19px;line-height:22px;text-align:center;font-size:13px;color:#3a3a3a">22</div></div>
<div class="a" style="left:38px;top:658px;width:26px;height:20px;background:linear-gradient(#fdd986,#fcd47a);border-right:1px solid #c8922e;border-bottom:1px solid #c8922e"><div class="t" style="left:0;top:0;width:25px;height:19px;line-height:22px;text-align:center;font-size:13px;color:#3a3a3a">23</div></div>
<div class="a" style="left:64px;top:218px;width:161px;height:447px;background:#70bb8c"></div>
<div class="a" style="left:225px;top:218px;width:304px;height:447px;background:#b8dcfc"></div>
<div class="a" style="left:64px;top:218px;width:161px;height:20px;background:#ffff00"></div>
<div class="a" style="left:225px;top:218px;width:304px;height:20px;background:#b7d95e"></div>
<div class="a" style="left:595px;top:218px;width:1px;height:447px;background:#dadcdd"></div>
<div class="a" style="left:659px;top:218px;width:1px;height:447px;background:#dadcdd"></div>
<div class="a" style="left:723px;top:218px;width:1px;height:447px;background:#dadcdd"></div>
<div class="a" style="left:787px;top:218px;width:1px;height:447px;background:#dadcdd"></div>
<div class="a" style="left:851px;top:218px;width:1px;height:447px;background:#dadcdd"></div>
<div class="a" style="left:915px;top:218px;width:1px;height:447px;background:#dadcdd"></div>
<div class="a" style="left:533px;top:237px;width:391px;height:1px;background:#dadcdd"></div>
<div class="a" style="left:533px;top:257px;width:391px;height:1px;background:#dadcdd"></div>
<div class="a" style="left:533px;top:277px;width:391px;height:1px;background:#dadcdd"></div>
<div class="a" style="left:533px;top:297px;width:391px;height:1px;background:#dadcdd"></div>
<div class="a" style="left:533px;top:317px;width:391px;height:1px;background:#dadcdd"></div>
<div class="a" style="left:533px;top:337px;width:391px;height:1px;background:#dadcdd"></div>
<div class="a" style="left:533px;top:357px;width:391px;height:1px;background:#dadcdd"></div>
<div class="a" style="left:533px;top:377px;width:391px;height:1px;background:#dadcdd"></div>
<div class="a" style="left:533px;top:397px;width:391px;height:1px;background:#dadcdd"></div>
<div class="a" style="left:533px;top:417px;width:391px;height:1px;background:#dadcdd"></div>
<div class="a" style="left:533px;top:437px;width:391px;height:1px;background:#dadcdd"></div>
<div class="a" style="left:533px;top:457px;width:391px;height:1px;background:#dadcdd"></div>
<div class="a" style="left:533px;top:477px;width:391px;height:1px;background:#dadcdd"></div>
<div class="a" style="left:533px;top:497px;width:391px;height:1px;background:#dadcdd"></div>
<div class="a" style="left:533px;top:517px;width:391px;height:1px;background:#dadcdd"></div>
<div class="a" style="left:533px;top:537px;width:391px;height:1px;background:#dadcdd"></div>
<div class="a" style="left:533px;top:557px;width:391px;height:1px;background:#dadcdd"></div>
<div class="a" style="left:533px;top:577px;width:391px;height:1px;background:#dadcdd"></div>
<div class="a" style="left:533px;top:597px;width:391px;height:1px;background:#dadcdd"></div>
<div class="a" style="left:533px;top:617px;width:391px;height:1px;background:#dadcdd"></div>
<div class="a" style="left:533px;top:637px;width:391px;height:1px;background:#dadcdd"></div>
<div class="a" style="left:533px;top:657px;width:391px;height:1px;background:#dadcdd"></div>
<div class="a" style="left:64px;top:237px;width:465px;height:1px;background:#17375e"></div>
<div class="a" style="left:64px;top:257px;width:465px;height:1px;background:#17375e"></div>
<div class="a" style="left:64px;top:277px;width:465px;height:1px;background:#17375e"></div>
<div class="a" style="left:64px;top:297px;width:465px;height:1px;background:#17375e"></div>
<div class="a" style="left:64px;top:317px;width:465px;height:1px;background:#17375e"></div>
<div class="a" style="left:64px;top:337px;width:465px;height:1px;background:#17375e"></div>
<div class="a" style="left:64px;top:357px;width:465px;height:1px;background:#17375e"></div>
<div class="a" style="left:64px;top:377px;width:465px;height:1px;background:#17375e"></div>
<div class="a" style="left:64px;top:397px;width:465px;height:1px;background:#17375e"></div>
<div class="a" style="left:64px;top:417px;width:465px;height:1px;background:#17375e"></div>
<div class="a" style="left:64px;top:437px;width:465px;height:1px;background:#17375e"></div>
<div class="a" style="left:64px;top:457px;width:465px;height:1px;background:#17375e"></div>
<div class="a" style="left:64px;top:477px;width:465px;height:1px;background:#17375e"></div>
<div class="a" style="left:64px;top:497px;width:465px;height:1px;background:#17375e"></div>
<div class="a" style="left:64px;top:517px;width:465px;height:1px;background:#17375e"></div>
<div class="a" style="left:64px;top:537px;width:465px;height:1px;background:#17375e"></div>
<div class="a" style="left:64px;top:557px;width:465px;height:1px;background:#17375e"></div>
<div class="a" style="left:64px;top:577px;width:465px;height:1px;background:#17375e"></div>
<div class="a" style="left:64px;top:597px;width:465px;height:1px;background:#17375e"></div>
<div class="a" style="left:64px;top:617px;width:465px;height:1px;background:#17375e"></div>
<div class="a" style="left:64px;top:637px;width:465px;height:1px;background:#17375e"></div>
<div class="a" style="left:64px;top:657px;width:465px;height:1px;background:#17375e"></div>
<div class="a" style="left:224px;top:218px;width:1px;height:447px;background:#17375e"></div>
<div class="a" style="left:385px;top:218px;width:1px;height:447px;background:#17375e"></div>
<div class="a" style="left:64px;top:218px;width:465px;height:1px;background:#0000ff"></div>
<div class="a" style="left:64px;top:218px;width:1px;height:447px;background:#3a20c0"></div>
<div class="a" style="left:64px;top:219px;width:1px;height:18px;background:#0000ff"></div>
<div class="a" style="left:529px;top:218px;width:1px;height:447px;background:#fff"></div>
<div class="a" style="left:530px;top:217px;width:1px;height:448px;background:#111"></div>
<div class="a" style="left:531px;top:217px;width:1px;height:448px;background:#fff"></div>
<div class="a" style="left:532px;top:217px;width:1px;height:448px;background:#111"></div>
<div class="t" style="left:105px;top:208px;width:400px;height:40px;line-height:40px;text-align:center;font-size:13.3px;color:#111">Дата</div>
<div class="t" style="left:391px;top:208px;width:138px;height:40px;line-height:40px;overflow:hidden;font-size:13.3px;color:#111">Сумма выручки</div>
<div class="t" style="left:66px;top:229px;height:40px;line-height:40px;font-size:13.4px;color:#111">Картофель</div>
<div class="t" style="left:105px;top:229px;width:400px;height:40px;line-height:40px;text-align:center;font-size:12.7px;color:#111">01.05.2016</div>
<div class="t" style="left:258px;top:229px;width:400px;height:40px;line-height:40px;text-align:center;font-size:12.2px;color:#111">10526</div>
<div class="t" style="left:66px;top:249px;height:40px;line-height:40px;font-size:13.4px;color:#111">Рыба</div>
<div class="t" style="left:105px;top:249px;width:400px;height:40px;line-height:40px;text-align:center;font-size:12.7px;color:#111">01.05.2016</div>
<div class="t" style="left:258px;top:249px;width:400px;height:40px;line-height:40px;text-align:center;font-size:12.2px;color:#111">17456</div>
<div class="t" style="left:66px;top:269px;height:40px;line-height:40px;font-size:13.4px;color:#111">Мясо</div>
<div class="t" style="left:105px;top:269px;width:400px;height:40px;line-height:40px;text-align:center;font-size:12.7px;color:#111">01.05.2016</div>
<div class="t" style="left:258px;top:269px;width:400px;height:40px;line-height:40px;text-align:center;font-size:12.2px;color:#111">21563</div>
<div class="t" style="left:66px;top:289px;height:40px;line-height:40px;font-size:13.4px;color:#111">Сахар</div>
<div class="t" style="left:105px;top:289px;width:400px;height:40px;line-height:40px;text-align:center;font-size:12.7px;color:#111">01.05.2016</div>
<div class="t" style="left:258px;top:289px;width:400px;height:40px;line-height:40px;text-align:center;font-size:12.2px;color:#111">8556</div>
<div class="t" style="left:66px;top:309px;height:40px;line-height:40px;font-size:13.4px;color:#111">Картофель</div>
<div class="t" style="left:105px;top:309px;width:400px;height:40px;line-height:40px;text-align:center;font-size:12.7px;color:#111">02.05.2016</div>
<div class="t" style="left:258px;top:309px;width:400px;height:40px;line-height:40px;text-align:center;font-size:12.2px;color:#111">11896</div>
<div class="t" style="left:66px;top:329px;height:40px;line-height:40px;font-size:13.4px;color:#111">Рыба</div>
<div class="t" style="left:105px;top:329px;width:400px;height:40px;line-height:40px;text-align:center;font-size:12.7px;color:#111">02.05.2016</div>
<div class="t" style="left:258px;top:329px;width:400px;height:40px;line-height:40px;text-align:center;font-size:12.2px;color:#111">21546</div>
<div class="t" style="left:66px;top:349px;height:40px;line-height:40px;font-size:13.4px;color:#111">Мясо</div>
<div class="t" style="left:105px;top:349px;width:400px;height:40px;line-height:40px;text-align:center;font-size:12.7px;color:#111">02.05.2016</div>
<div class="t" style="left:258px;top:349px;width:400px;height:40px;line-height:40px;text-align:center;font-size:12.2px;color:#111">10526</div>
<div class="t" style="left:66px;top:369px;height:40px;line-height:40px;font-size:13.4px;color:#111">Сахар</div>
<div class="t" style="left:105px;top:369px;width:400px;height:40px;line-height:40px;text-align:center;font-size:12.7px;color:#111">02.05.2016</div>
<div class="t" style="left:258px;top:369px;width:400px;height:40px;line-height:40px;text-align:center;font-size:12.2px;color:#111">7855</div>
<div class="t" style="left:66px;top:389px;height:40px;line-height:40px;font-size:13.4px;color:#111">Картофель</div>
<div class="t" style="left:105px;top:389px;width:400px;height:40px;line-height:40px;text-align:center;font-size:12.7px;color:#111">03.05.2016</div>
<div class="t" style="left:258px;top:389px;width:400px;height:40px;line-height:40px;text-align:center;font-size:12.2px;color:#111">15456</div>
<div class="t" style="left:66px;top:409px;height:40px;line-height:40px;font-size:13.4px;color:#111">Рыба</div>
<div class="t" style="left:105px;top:409px;width:400px;height:40px;line-height:40px;text-align:center;font-size:12.7px;color:#111">03.05.2016</div>
<div class="t" style="left:258px;top:409px;width:400px;height:40px;line-height:40px;text-align:center;font-size:12.2px;color:#111">11496</div>
<div class="t" style="left:66px;top:429px;height:40px;line-height:40px;font-size:13.4px;color:#111">Мясо</div>
<div class="t" style="left:105px;top:429px;width:400px;height:40px;line-height:40px;text-align:center;font-size:12.7px;color:#111">03.05.2016</div>
<div class="t" style="left:258px;top:429px;width:400px;height:40px;line-height:40px;text-align:center;font-size:12.2px;color:#111">9568</div>
<div class="t" style="left:66px;top:449px;height:40px;line-height:40px;font-size:13.4px;color:#111">Сахар</div>
<div class="t" style="left:105px;top:449px;width:400px;height:40px;line-height:40px;text-align:center;font-size:12.7px;color:#111">03.05.2016</div>
<div class="t" style="left:258px;top:449px;width:400px;height:40px;line-height:40px;text-align:center;font-size:12.2px;color:#111">1234</div>
<div class="t" style="left:66px;top:469px;height:40px;line-height:40px;font-size:13.4px;color:#111">Картофель</div>
<div class="t" style="left:105px;top:469px;width:400px;height:40px;line-height:40px;text-align:center;font-size:12.7px;color:#111">04.05.2016</div>
<div class="t" style="left:258px;top:469px;width:400px;height:40px;line-height:40px;text-align:center;font-size:12.2px;color:#111">14589</div>
<div class="t" style="left:66px;top:489px;height:40px;line-height:40px;font-size:13.4px;color:#111">Рыба</div>
<div class="t" style="left:105px;top:489px;width:400px;height:40px;line-height:40px;text-align:center;font-size:12.7px;color:#111">04.05.2016</div>
<div class="t" style="left:258px;top:489px;width:400px;height:40px;line-height:40px;text-align:center;font-size:12.2px;color:#111">10456</div>
<div class="t" style="left:66px;top:509px;height:40px;line-height:40px;font-size:13.4px;color:#111">Мясо</div>
<div class="t" style="left:105px;top:509px;width:400px;height:40px;line-height:40px;text-align:center;font-size:12.7px;color:#111">04.05.2016</div>
<div class="t" style="left:258px;top:509px;width:400px;height:40px;line-height:40px;text-align:center;font-size:12.2px;color:#111">15461</div>
<div class="t" style="left:66px;top:529px;height:40px;line-height:40px;font-size:13.4px;color:#111">Сахар</div>
<div class="t" style="left:105px;top:529px;width:400px;height:40px;line-height:40px;text-align:center;font-size:12.7px;color:#111">04.05.2016</div>
<div class="t" style="left:258px;top:529px;width:400px;height:40px;line-height:40px;text-align:center;font-size:12.2px;color:#111">3256</div>
<div class="t" style="left:66px;top:549px;height:40px;line-height:40px;font-size:13.4px;color:#111">Чай</div>
<div class="t" style="left:105px;top:549px;width:400px;height:40px;line-height:40px;text-align:center;font-size:12.7px;color:#111">04.05.2016</div>
<div class="t" style="left:258px;top:549px;width:400px;height:40px;line-height:40px;text-align:center;font-size:12.2px;color:#111">2458</div>
<div class="t" style="left:66px;top:569px;height:40px;line-height:40px;font-size:13.4px;color:#111">Мясо</div>
<div class="t" style="left:105px;top:569px;width:400px;height:40px;line-height:40px;text-align:center;font-size:12.7px;color:#111">05.05.2016</div>
<div class="t" style="left:258px;top:569px;width:400px;height:40px;line-height:40px;text-align:center;font-size:12.2px;color:#111">10256</div>
<div class="t" style="left:66px;top:589px;height:40px;line-height:40px;font-size:13.4px;color:#111">Сахар</div>
<div class="t" style="left:105px;top:589px;width:400px;height:40px;line-height:40px;text-align:center;font-size:12.7px;color:#111">05.05.2016</div>
<div class="t" style="left:258px;top:589px;width:400px;height:40px;line-height:40px;text-align:center;font-size:12.2px;color:#111">5469</div>
<div class="t" style="left:66px;top:609px;height:40px;line-height:40px;font-size:13.4px;color:#111">Чай</div>
<div class="t" style="left:105px;top:609px;width:400px;height:40px;line-height:40px;text-align:center;font-size:12.7px;color:#111">05.05.2016</div>
<div class="t" style="left:258px;top:609px;width:400px;height:40px;line-height:40px;text-align:center;font-size:12.2px;color:#111">2457</div>
<div class="t" style="left:66px;top:629px;height:40px;line-height:40px;font-size:13.4px;color:#111">Картофель</div>
<div class="t" style="left:105px;top:629px;width:400px;height:40px;line-height:40px;text-align:center;font-size:12.7px;color:#111">06.05.2016</div>
<div class="t" style="left:258px;top:629px;width:400px;height:40px;line-height:40px;text-align:center;font-size:12.2px;color:#111">12546</div>
<div class="t" style="left:66px;top:649px;height:40px;line-height:40px;font-size:13.4px;color:#111">Рыба</div>
<div class="t" style="left:105px;top:649px;width:400px;height:40px;line-height:40px;text-align:center;font-size:12.7px;color:#111">06.05.2016</div>
<div class="t" style="left:258px;top:649px;width:400px;height:40px;line-height:40px;text-align:center;font-size:12.2px;color:#111">11756</div>
</div>
<div class="a" style="left:924px;top:198px;width:14px;height:467px;background:linear-gradient(90deg,#d3d9e1,#e6eaef)"></div>
<div class="a" style="left:924px;top:205px;width:14px;height:339px;background:linear-gradient(90deg,#f2f4f7,#d9dee5);border:1px solid #8a94a2;border-radius:2px"></div>
<svg style="left:927px;top:654px" width="9" height="5" viewBox="0 0 9 5"><path d="M0 0H9L4.5 4.5Z" fill="#4a505a"/></svg>
<div class="a" style="left:37px;top:665px;width:901px;height:16px;background:linear-gradient(#e6eaf0,#dde2e9)"></div>
<div class="a" style="left:37px;top:665px;width:901px;height:1px;background:#b4bdc8"></div>
<div class="a" style="left:37px;top:679px;width:901px;height:2px;background:#9aa3ae"></div>
<svg style="left:44px;top:667px" width="9" height="10" viewBox="0 0 9 10"><path d="M1 1V9M8 1L3 5L8 9Z" fill="#333" stroke="#333" stroke-width="0.8"/></svg>
<svg style="left:59px;top:667px" width="9" height="10" viewBox="0 0 9 10"><path d="M6 1L1 5L6 9Z" fill="#333" stroke="#333" stroke-width="0.8"/></svg>
<svg style="left:72px;top:667px" width="9" height="10" viewBox="0 0 9 10"><path d="M1 1L6 5L1 9Z" fill="#333" stroke="#333" stroke-width="0.8"/></svg>
<svg style="left:88px;top:667px" width="9" height="10" viewBox="0 0 9 10"><path d="M0 1L5 5L0 9ZM7 1V9" fill="#333" stroke="#333" stroke-width="0.8"/></svg>
<svg style="left:90px;top:665px" width="240" height="15" viewBox="0 0 240 15"><path d="M9 0H73L62 14H10Z" fill="#fff"/><path d="M9 0V14" stroke="#b0b8c2"/><path d="M62 14.5L73.5 0M114 14.5L126 0M167 14.5L179 0M219 14.5L231 0" stroke="#8e98a4" stroke-width="1.1"/><path d="M62 14L66 14L66 10Z M114 14L118 14L118 10Z M167 14L171 14L171 10Z" fill="#9aa4b0"/></svg>
<div class="t" style="left:110px;top:653px;height:40px;line-height:40px;font-size:12.34px;font-weight:bold;color:#222">Лист1</div>
<div class="t" style="left:164px;top:653px;height:40px;line-height:40px;font-size:12.46px;color:#333">Лист2</div>
<div class="t" style="left:217px;top:653px;height:40px;line-height:40px;font-size:12.46px;color:#333">Лист3</div>
<svg style="left:271px;top:666px" width="16" height="13" viewBox="0 0 16 13"><rect x="3" y="3" width="11" height="9" rx="1" fill="#e8eef6" stroke="#5a7090"/><circle cx="4" cy="3" r="3" fill="#f0c020"/></svg>
<div class="a" style="left:571px;top:666px;width:8px;height:15px;background:linear-gradient(#fff,#e8ecf8);border:1px solid #7a8594"></div>
<svg style="left:582px;top:669px" width="6" height="9" viewBox="0 0 6 9"><path d="M6 0V9L0 4.5Z" fill="#333"/></svg>
<div class="a" style="left:595px;top:666px;width:270px;height:13px;background:linear-gradient(#f4f6f9,#dfe4ea);border:1px solid #8a94a2;border-radius:2px"></div>
<div class="a" style="left:727px;top:668px;width:8px;height:8px;background:repeating-linear-gradient(90deg,#6a7280 0 1px,transparent 1px 2px)"></div>
<svg style="left:905px;top:669px" width="6" height="9" viewBox="0 0 6 9"><path d="M0 0V9L6 4.5Z" fill="#333"/></svg>
<div class="a" style="left:916px;top:666px;width:8px;height:15px;background:linear-gradient(#fff,#e8ecf8);border:1px solid #7a8594"></div>
<div class="a" style="left:37px;top:681px;width:901px;height:23px;background:linear-gradient(#f1f3f6,#e2e6eb 50%,#c9d0d9);border-left:1px solid #66707c;border-bottom:1px solid #66707c"></div>
<div class="t" style="left:46px;top:672px;height:40px;line-height:40px;font-size:11.66px;color:#333">Готово</div>
<div class="a" style="left:93px;top:684px;width:1px;height:18px;background:#b8c0ca"></div>
<svg style="left:102px;top:684px" width="15" height="15" viewBox="0 0 15 15"><rect x="1" y="3" width="13" height="11" fill="#fff" stroke="#4a6aa0"/><path d="M1 6H14M1 9H14M1 12H14M5 3V14M9 3V14" stroke="#6a8ac0"/><circle cx="4" cy="3.5" r="3" fill="#e03010"/></svg>
<div class="a" style="left:127px;top:684px;width:1px;height:18px;background:#b8c0ca"></div>
<div class="t" style="left:365px;top:672px;height:40px;line-height:40px;font-size:10.81px;color:#333">Среднее: 26639,51786</div>
<div class="t" style="left:495px;top:672px;height:40px;line-height:40px;font-size:11.23px;color:#333">Количество: 86</div>
<div class="t" style="left:592px;top:672px;height:40px;line-height:40px;font-size:10.54px;color:#333">Сумма: 1491813</div>
<div class="a" style="left:686px;top:684px;width:1px;height:18px;background:#b8c0ca"></div>
<div class="a" style="left:689px;top:683px;width:17px;height:18px;background:linear-gradient(#fde99a,#fbd46c);border:1px solid #d8a84c;border-radius:2px"></div>
<svg style="left:692px;top:686px" width="11" height="11" viewBox="0 0 11 11"><rect x="0.5" y="0.5" width="10" height="10" fill="#fff" stroke="#555"/><path d="M0 3.5H11M0 6.5H11M3.5 0V11M7.5 0V11" stroke="#555"/></svg>
<svg style="left:710px;top:686px" width="12" height="12" viewBox="0 0 12 12"><rect x="0.5" y="0.5" width="11" height="11" fill="#e8e8e8" stroke="#666"/><rect x="3" y="3" width="6" height="6" fill="#fff" stroke="#888"/></svg>
<svg style="left:730px;top:686px" width="13" height="12" viewBox="0 0 13 12"><rect x="0.5" y="0.5" width="12" height="11" fill="#e8e8e8" stroke="#666"/><rect x="2.5" y="2" width="4" height="9" fill="#fff" stroke="#888"/><rect x="7.5" y="2" width="3" height="5" fill="#fff" stroke="#888"/></svg>
<div class="t" style="left:753px;top:672px;height:40px;line-height:40px;font-size:10.56px;color:#333">100%</div>
<svg style="left:788px;top:684px" width="16" height="16" viewBox="0 0 16 16"><circle cx="8" cy="8" r="7.5" fill="#f4f6f8" stroke="#6a7482"/><rect x="4" y="7" width="8" height="2.2" fill="#333"/></svg>
<div class="a" style="left:804px;top:691px;width:101px;height:1px;background:#8a94a2"></div>
<div class="a" style="left:804px;top:692px;width:101px;height:1px;background:#fff"></div>
<svg style="left:850px;top:684px" width="11" height="16" viewBox="0 0 11 16"><path d="M0.5 0.5H10.5V10L5.5 15L0.5 10Z" fill="#f4f6f8" stroke="#6a7482"/></svg>
<svg style="left:905px;top:684px" width="16" height="16" viewBox="0 0 16 16"><circle cx="8" cy="8" r="7.5" fill="#f4f6f8" stroke="#6a7482"/><rect x="4" y="7" width="8" height="2.2" fill="#333"/><rect x="6.9" y="4" width="2.2" height="8" fill="#333"/></svg>
<svg style="left:928px;top:692px" width="9" height="9" viewBox="0 0 9 9"><g fill="#a0a8b4"><rect x="7" y="0" width="2" height="2"/><rect x="4" y="3" width="2" height="2"/><rect x="7" y="3" width="2" height="2"/><rect x="1" y="6" width="2" height="2"/><rect x="4" y="6" width="2" height="2"/><rect x="7" y="6" width="2" height="2"/></g></svg>
<div class="a" style="left:32px;top:704px;width:907px;height:5px;background:linear-gradient(#e6eff9,#bcd3ec 40%,#b2cbe8);border-radius:0 0 0 3px"></div>
<div class="a" style="left:482px;top:84px;width:182px;height:22px;background:linear-gradient(#fdeeb0,#fbdb7c 50%,#f9cf5c);border:1px solid #d6b25a;border-radius:2px"></div>
<svg style="left:485px;top:86px" width="20" height="19" viewBox="0 0 20 19"><rect x="0.5" y="0.5" width="13" height="13" fill="#fff" stroke="#5a6a8a"/><rect x="1" y="1" width="12" height="3" fill="#4a6ab0"/><rect x="1" y="5" width="4" height="3" fill="#d03020"/><rect x="1" y="9" width="4" height="3" fill="#4a6ab0"/><path d="M5 1V13M9 1V13M1 8.5H13" stroke="#8a9ab8"/><rect x="7.5" y="8.5" width="11" height="10" fill="#fff" stroke="#4a5a7a"/><text x="13" y="16" font-size="7" text-anchor="middle" font-family="Liberation Sans" fill="#222">≤≥</text></svg>
<div class="t" style="left:503px;top:76px;height:40px;line-height:40px;font-size:11.56px;color:#222">Условное форматирование</div>
<svg style="left:654px;top:94px" width="7" height="4" viewBox="0 0 7 4"><path d="M0 0H7L3.5 3.5Z" fill="#555"/></svg>
<div class="a" style="left:481px;top:107px;width:331px;height:296px;background:#fff;border:1px solid #a7aeb8;box-shadow:2px 2px 3px rgba(0,0,0,0.22)"></div>
<div class="a" style="left:483px;top:198px;width:327px;height:1px;background:repeating-linear-gradient(90deg,#a8acb2 0 2px,transparent 2px 4px)"></div>
<div class="a" style="left:483px;top:201px;width:327px;height:44px;background:linear-gradient(#fdf4d2,#fbe7a8 30%,#f9dc7c 52%,#fbe9ae 76%,#fdf6d8);border:1px solid #e7c463;border-radius:2px"></div>
<svg style="left:489px;top:115px" width="32" height="31" viewBox="0 0 32 31"><rect x="2" y="2" width="30" height="29" fill="rgba(0,0,0,0.15)"/><rect x="0.5" y="0.5" width="29" height="28" fill="#eef3fa" stroke="#7d8fae"/><path d="M0.5 5.8H29.5" stroke="#9eb0cc"/><path d="M0.5 11.6H29.5" stroke="#9eb0cc"/><path d="M0.5 17.4H29.5" stroke="#9eb0cc"/><path d="M0.5 23.2H29.5" stroke="#9eb0cc"/><path d="M8.5 0.5V28.5M21.5 0.5V28.5" stroke="#9eb0cc"/><rect x="9" y="12" width="12" height="5" fill="#f2d060" stroke="#c8a030"/><rect x="18.5" y="18.5" width="12" height="11" fill="#fff" stroke="#5a6a8a"/><text x="24.5" y="27" font-size="8" font-weight="bold" text-anchor="middle" font-family="Liberation Sans" fill="#111">≤&gt;</text></svg>
<div class="t" style="left:529px;top:111px;height:40px;line-height:40px;font-size:10.84px;font-weight:bold;color:#222">П<u>р</u>авила выделения ячеек</div>
<svg style="left:489px;top:159px" width="32" height="31" viewBox="0 0 32 31"><rect x="2" y="2" width="30" height="29" fill="rgba(0,0,0,0.15)"/><rect x="0.5" y="0.5" width="29" height="28" fill="#eef3fa" stroke="#7d8fae"/><path d="M0.5 5.8H29.5" stroke="#9eb0cc"/><path d="M0.5 11.6H29.5" stroke="#9eb0cc"/><path d="M0.5 17.4H29.5" stroke="#9eb0cc"/><path d="M0.5 23.2H29.5" stroke="#9eb0cc"/><path d="M8.5 0.5V28.5M21.5 0.5V28.5" stroke="#9eb0cc"/><rect x="9" y="5.5" width="12" height="12" fill="#f2d060" stroke="#c8a030"/><path d="M15 16V8M12.5 10.5L15 7.5L17.5 10.5" stroke="#111" stroke-width="1.4" fill="none"/><rect x="17.5" y="18.5" width="13" height="11" fill="#fff" stroke="#5a6a8a"/><text x="24" y="28.5" font-size="10" font-weight="bold" text-anchor="middle" font-family="Liberation Serif" fill="#111">10</text></svg>
<div class="t" style="left:528px;top:155px;height:40px;line-height:40px;font-size:11.05px;font-weight:bold;color:#222"><u>П</u>равила отбора первых и последних значений</div>
<svg style="left:489px;top:209px" width="31" height="28" viewBox="0 0 31 28"><rect x="1.5" y="1.5" width="28" height="25" fill="rgba(0,0,0,0.12)"/><rect x="0.5" y="0.5" width="28" height="25" fill="#fff" stroke="#4a6298"/><rect x="22" y="1" width="6" height="24" fill="#d6e2f4"/><path d="M0.5 5.5H28.5M0.5 10.5H28.5M0.5 15.5H28.5M0.5 20.5H28.5M6.5 0.5V25.5M22.5 0.5V25.5" stroke="#9fb2d2"/><path d="M6.5 0.5H15.5V5.5H11.5V10.5H14.5V15.5H16.5V20.5H12.5V25.5H6.5Z" fill="#5b84d0" stroke="#2f4fa0"/><path d="M17 3H21.5M13 8H21.5M16 13H21.5M17.5 18H21.5M14 23H21.5" stroke="#6a6a6a" stroke-width="1.8"/></svg>
<div class="t" style="left:528px;top:203px;height:40px;line-height:40px;font-size:11.17px;font-weight:bold;color:#222"><u>Г</u>истограммы</div>
<svg style="left:489px;top:253px" width="31" height="28" viewBox="0 0 31 28"><rect x="2" y="2" width="29" height="26" fill="rgba(0,0,0,0.15)"/><rect x="0.5" y="0.5" width="28" height="25" fill="#eef3fa" stroke="#7d8fae"/><path d="M0.5 5.2H28.5" stroke="#9eb0cc"/><path d="M0.5 10.4H28.5" stroke="#9eb0cc"/><path d="M0.5 15.6H28.5" stroke="#9eb0cc"/><path d="M0.5 20.8H28.5" stroke="#9eb0cc"/><path d="M8.5 0.5V25.5M20.5 0.5V25.5" stroke="#9eb0cc"/><rect x="8.5" y="1" width="13" height="4.5" fill="#5ab05a"/><rect x="8.5" y="6" width="13" height="4.5" fill="#a8d070"/><rect x="8.5" y="11" width="13" height="4.5" fill="#f2e070"/><rect x="8.5" y="16" width="13" height="4.5" fill="#f4a860"/><rect x="8.5" y="21" width="13" height="4.5" fill="#e86050"/><path d="M14 3H19M14 8H19M14 13H19M14 18H19M14 23H19" stroke="#555" stroke-width="1.3"/></svg>
<div class="t" style="left:528px;top:247px;height:40px;line-height:40px;font-size:10.76px;font-weight:bold;color:#222">Цветовые <u>ш</u>калы</div>
<svg style="left:489px;top:297px" width="31" height="28" viewBox="0 0 31 28"><rect x="2" y="2" width="29" height="26" fill="rgba(0,0,0,0.15)"/><rect x="0.5" y="0.5" width="28" height="25" fill="#eef3fa" stroke="#7d8fae"/><path d="M0.5 5.2H28.5" stroke="#9eb0cc"/><path d="M0.5 10.4H28.5" stroke="#9eb0cc"/><path d="M0.5 15.6H28.5" stroke="#9eb0cc"/><path d="M0.5 20.8H28.5" stroke="#9eb0cc"/><path d="M8.5 0.5V25.5M20.5 0.5V25.5" stroke="#9eb0cc"/><circle cx="11" cy="3" r="2" fill="#30a030"/><circle cx="11" cy="8" r="2" fill="#d8c020"/><circle cx="11" cy="13" r="2" fill="#30a030"/><circle cx="11" cy="18" r="2" fill="#e03020"/><circle cx="11" cy="23" r="2" fill="#30a030"/><path d="M15 3H21M15 8H21M15 13H21M15 18H21M15 23H21" stroke="#777" stroke-width="1.5"/></svg>
<div class="t" style="left:528px;top:291px;height:40px;line-height:40px;font-size:11.01px;font-weight:bold;color:#222"><u>Н</u>аборы значков</div>
<svg style="left:797px;top:126px" width="5" height="9" viewBox="0 0 5 9"><path d="M0 0L5 4.5L0 9Z" fill="#6a6a6a"/></svg>
<svg style="left:797px;top:171px" width="5" height="9" viewBox="0 0 5 9"><path d="M0 0L5 4.5L0 9Z" fill="#6a6a6a"/></svg>
<svg style="left:797px;top:218px" width="5" height="9" viewBox="0 0 5 9"><path d="M0 0L5 4.5L0 9Z" fill="#6a6a6a"/></svg>
<svg style="left:797px;top:262px" width="5" height="9" viewBox="0 0 5 9"><path d="M0 0L5 4.5L0 9Z" fill="#6a6a6a"/></svg>
<svg style="left:797px;top:306px" width="5" height="9" viewBox="0 0 5 9"><path d="M0 0L5 4.5L0 9Z" fill="#6a6a6a"/></svg>
<svg style="left:797px;top:364px" width="5" height="9" viewBox="0 0 5 9"><path d="M0 0L5 4.5L0 9Z" fill="#6a6a6a"/></svg>
<div class="a" style="left:483px;top:333px;width:327px;height:1px;background:#dfe2e6"></div>
<div class="a" style="left:507px;top:335px;width:1px;height:65px;background:#e2e4e8"></div>
<svg style="left:487px;top:339px" width="18" height="15" viewBox="0 0 18 15"><rect x="0.5" y="2.5" width="13" height="11" fill="#fff" stroke="#7d8fae"/><path d="M0.5 6H13.5M0.5 10H13.5M4.5 2.5V13.5M9.5 2.5V13.5" stroke="#9eb0cc"/><rect x="5" y="6.5" width="4" height="3" fill="#f0c040"/><path d="M14 0L15 3L18 4L15 5L14 8L13 5L10 4L13 3Z" fill="#f8e040"/></svg>
<div class="t" style="left:516px;top:326px;height:40px;line-height:40px;font-size:11.24px;color:#222"><u>С</u>оздать правило...</div>
<svg style="left:487px;top:360px" width="18" height="15" viewBox="0 0 18 15"><rect x="0.5" y="0.5" width="13" height="11" fill="#fff" stroke="#7d8fae"/><path d="M0.5 4H13.5M0.5 8H13.5M4.5 0.5V11.5" stroke="#9eb0cc"/><rect x="5" y="4.5" width="4" height="3" fill="#f0c040"/><path d="M8 12L14 6L18 10L12 15Z" fill="#e8ecf2" stroke="#8a94a4"/></svg>
<div class="t" style="left:516px;top:348px;height:40px;line-height:40px;font-size:11.15px;color:#222"><u>У</u>далить правила</div>
<svg style="left:487px;top:382px" width="18" height="15" viewBox="0 0 18 15"><rect x="3.5" y="0.5" width="13" height="12" fill="#fff" stroke="#7d8fae"/><rect x="0.5" y="2.5" width="13" height="12" fill="#fff" stroke="#7d8fae"/><path d="M0.5 6H13.5M0.5 10H13.5M4.5 2.5V14.5M9.5 2.5V14.5" stroke="#9eb0cc"/><rect x="5" y="6.5" width="4" height="3" fill="#f0c040"/></svg>
<div class="t" style="left:516px;top:370px;height:40px;line-height:40px;font-size:11.44px;color:#222">Управлени<u>е</u> правилами...</div>
<div class="a" style="left:811px;top:205px;width:127px;height:215px;background:#fafbfc;border-left:1px solid #a9b0ba"></div>
<div class="a" style="left:812px;top:207px;width:126px;height:13px;background:#e6e9ee"></div>
<div class="t" style="left:821px;top:194px;height:40px;line-height:40px;font-size:10.78px;font-weight:bold;color:#2a2a3a">Градиентная заливка</div>
<div class="a" style="left:812px;top:301px;width:126px;height:18px;background:#e6e9ee"></div>
<div class="t" style="left:820px;top:291px;height:40px;line-height:40px;font-size:10.77px;font-weight:bold;color:#2a2a3a">Сплошная заливка</div>
<div class="a" style="left:812px;top:399px;width:126px;height:1px;background:#d8dce2"></div>
<div class="a" style="left:837px;top:400px;width:1px;height:20px;background:#dde0e5"></div>
<div class="a" style="left:812px;top:400px;width:126px;height:20px;overflow:hidden"><div class="t" style="left:34px;top:-8px;height:40px;line-height:40px;font-size:11.9px;color:#222">Другие правила...</div></div>
<svg style="left:817px;top:227px" width="31" height="27" viewBox="0 0 31 27"><rect x="1.5" y="1.5" width="29" height="25" fill="rgba(0,0,0,0.12)"/><rect x="0.5" y="0.5" width="28" height="24" fill="#fff" stroke="#7f95bb"/><rect x="21" y="1" width="7" height="23" fill="#e9eef6"/><rect x="1" y="1" width="6" height="23" fill="#f6f8fb"/><path d="M0.5 6.5H28.5" stroke="#8fa3c4"/><path d="M0.5 12.5H28.5" stroke="#8fa3c4"/><path d="M0.5 18.5H28.5" stroke="#8fa3c4"/><path d="M6.5 0.5V24.5M21.5 0.5V24.5" stroke="#8fa3c4"/><path d="M6.5 0.5H11V6.5H14.5V12.5H11V18.5H13.5V24.5H6.5Z" fill="#5a7fc4" stroke="#3a5a9a"/><rect x="15" y="2.5" width="5" height="2" fill="#6e6e6e"/><rect x="15" y="8.5" width="5" height="2" fill="#6e6e6e"/><rect x="15" y="14.5" width="5" height="2" fill="#6e6e6e"/><rect x="15" y="20.5" width="5" height="2" fill="#6e6e6e"/></svg>
<svg style="left:857px;top:227px" width="31" height="27" viewBox="0 0 31 27"><rect x="1.5" y="1.5" width="29" height="25" fill="rgba(0,0,0,0.12)"/><rect x="0.5" y="0.5" width="28" height="24" fill="#fff" stroke="#7f95bb"/><rect x="21" y="1" width="7" height="23" fill="#e9eef6"/><rect x="1" y="1" width="6" height="23" fill="#f6f8fb"/><path d="M0.5 6.5H28.5" stroke="#8fa3c4"/><path d="M0.5 12.5H28.5" stroke="#8fa3c4"/><path d="M0.5 18.5H28.5" stroke="#8fa3c4"/><path d="M6.5 0.5V24.5M21.5 0.5V24.5" stroke="#8fa3c4"/><defs><linearGradient id="g1" x1="0" x2="1"><stop offset="0" stop-color="#5cb870"/><stop offset="0.35" stop-color="#5cb870"/><stop offset="1" stop-color="#5cb870" stop-opacity="0.05"/></linearGradient></defs><rect x="6.5" y="0.5" width="6.0" height="6" fill="url(#g1)"/><rect x="6.5" y="6.5" width="9.5" height="6" fill="url(#g1)"/><rect x="6.5" y="12.5" width="6.0" height="6" fill="url(#g1)"/><rect x="6.5" y="18.5" width="8.5" height="6" fill="url(#g1)"/><path d="M7 0.5V24.5" stroke="#5cb870" stroke-width="1.5"/><rect x="15" y="2.5" width="5" height="2" fill="#6e6e6e"/><rect x="15" y="8.5" width="5" height="2" fill="#6e6e6e"/><rect x="15" y="14.5" width="5" height="2" fill="#6e6e6e"/><rect x="15" y="20.5" width="5" height="2" fill="#6e6e6e"/></svg>
<svg style="left:897px;top:227px" width="31" height="27" viewBox="0 0 31 27"><rect x="1.5" y="1.5" width="29" height="25" fill="rgba(0,0,0,0.12)"/><rect x="0.5" y="0.5" width="28" height="24" fill="#fff" stroke="#7f95bb"/><rect x="21" y="1" width="7" height="23" fill="#e9eef6"/><rect x="1" y="1" width="6" height="23" fill="#f6f8fb"/><path d="M0.5 6.5H28.5" stroke="#8fa3c4"/><path d="M0.5 12.5H28.5" stroke="#8fa3c4"/><path d="M0.5 18.5H28.5" stroke="#8fa3c4"/><path d="M6.5 0.5V24.5M21.5 0.5V24.5" stroke="#8fa3c4"/><defs><linearGradient id="g2" x1="0" x2="1"><stop offset="0" stop-color="#f05858"/><stop offset="0.35" stop-color="#f05858"/><stop offset="1" stop-color="#f05858" stop-opacity="0.05"/></linearGradient></defs><rect x="6.5" y="0.5" width="6.0" height="6" fill="url(#g2)"/><rect x="6.5" y="6.5" width="9.5" height="6" fill="url(#g2)"/><rect x="6.5" y="12.5" width="6.0" height="6" fill="url(#g2)"/><rect x="6.5" y="18.5" width="8.5" height="6" fill="url(#g2)"/><path d="M7 0.5V24.5" stroke="#f05858" stroke-width="1.5"/><rect x="15" y="2.5" width="5" height="2" fill="#6e6e6e"/><rect x="15" y="8.5" width="5" height="2" fill="#6e6e6e"/><rect x="15" y="14.5" width="5" height="2" fill="#6e6e6e"/><rect x="15" y="20.5" width="5" height="2" fill="#6e6e6e"/></svg>
<svg style="left:817px;top:268px" width="31" height="27" viewBox="0 0 31 27"><rect x="1.5" y="1.5" width="29" height="25" fill="rgba(0,0,0,0.12)"/><rect x="0.5" y="0.5" width="28" height="24" fill="#fff" stroke="#7f95bb"/><rect x="21" y="1" width="7" height="23" fill="#e9eef6"/><rect x="1" y="1" width="6" height="23" fill="#f6f8fb"/><path d="M0.5 6.5H28.5" stroke="#8fa3c4"/><path d="M0.5 12.5H28.5" stroke="#8fa3c4"/><path d="M0.5 18.5H28.5" stroke="#8fa3c4"/><path d="M6.5 0.5V24.5M21.5 0.5V24.5" stroke="#8fa3c4"/><defs><linearGradient id="g3" x1="0" x2="1"><stop offset="0" stop-color="#f8ac20"/><stop offset="0.35" stop-color="#f8ac20"/><stop offset="1" stop-color="#f8ac20" stop-opacity="0.05"/></linearGradient></defs><rect x="6.5" y="0.5" width="6.0" height="6" fill="url(#g3)"/><rect x="6.5" y="6.5" width="9.5" height="6" fill="url(#g3)"/><rect x="6.5" y="12.5" width="6.0" height="6" fill="url(#g3)"/><rect x="6.5" y="18.5" width="8.5" height="6" fill="url(#g3)"/><path d="M7 0.5V24.5" stroke="#f8ac20" stroke-width="1.5"/><rect x="15" y="2.5" width="5" height="2" fill="#6e6e6e"/><rect x="15" y="8.5" width="5" height="2" fill="#6e6e6e"/><rect x="15" y="14.5" width="5" height="2" fill="#6e6e6e"/><rect x="15" y="20.5" width="5" height="2" fill="#6e6e6e"/></svg>
<svg style="left:857px;top:268px" width="31" height="27" viewBox="0 0 31 27"><rect x="1.5" y="1.5" width="29" height="25" fill="rgba(0,0,0,0.12)"/><rect x="0.5" y="0.5" width="28" height="24" fill="#fff" stroke="#7f95bb"/><rect x="21" y="1" width="7" height="23" fill="#e9eef6"/><rect x="1" y="1" width="6" height="23" fill="#f6f8fb"/><path d="M0.5 6.5H28.5" stroke="#8fa3c4"/><path d="M0.5 12.5H28.5" stroke="#8fa3c4"/><path d="M0.5 18.5H28.5" stroke="#8fa3c4"/><path d="M6.5 0.5V24.5M21.5 0.5V24.5" stroke="#8fa3c4"/><defs><linearGradient id="g4" x1="0" x2="1"><stop offset="0" stop-color="#1e8ce8"/><stop offset="0.35" stop-color="#1e8ce8"/><stop offset="1" stop-color="#1e8ce8" stop-opacity="0.05"/></linearGradient></defs><rect x="6.5" y="0.5" width="6.0" height="6" fill="url(#g4)"/><rect x="6.5" y="6.5" width="9.5" height="6" fill="url(#g4)"/><rect x="6.5" y="12.5" width="6.0" height="6" fill="url(#g4)"/><rect x="6.5" y="18.5" width="8.5" height="6" fill="url(#g4)"/><path d="M7 0.5V24.5" stroke="#1e8ce8" stroke-width="1.5"/><rect x="15" y="2.5" width="5" height="2" fill="#6e6e6e"/><rect x="15" y="8.5" width="5" height="2" fill="#6e6e6e"/><rect x="15" y="14.5" width="5" height="2" fill="#6e6e6e"/><rect x="15" y="20.5" width="5" height="2" fill="#6e6e6e"/></svg>
<svg style="left:897px;top:268px" width="31" height="27" viewBox="0 0 31 27"><rect x="1.5" y="1.5" width="29" height="25" fill="rgba(0,0,0,0.12)"/><rect x="0.5" y="0.5" width="28" height="24" fill="#fff" stroke="#7f95bb"/><rect x="21" y="1" width="7" height="23" fill="#e9eef6"/><rect x="1" y="1" width="6" height="23" fill="#f6f8fb"/><path d="M0.5 6.5H28.5" stroke="#8fa3c4"/><path d="M0.5 12.5H28.5" stroke="#8fa3c4"/><path d="M0.5 18.5H28.5" stroke="#8fa3c4"/><path d="M6.5 0.5V24.5M21.5 0.5V24.5" stroke="#8fa3c4"/><defs><linearGradient id="g5" x1="0" x2="1"><stop offset="0" stop-color="#f068b8"/><stop offset="0.35" stop-color="#f068b8"/><stop offset="1" stop-color="#f068b8" stop-opacity="0.05"/></linearGradient></defs><rect x="6.5" y="0.5" width="6.0" height="6" fill="url(#g5)"/><rect x="6.5" y="6.5" width="9.5" height="6" fill="url(#g5)"/><rect x="6.5" y="12.5" width="6.0" height="6" fill="url(#g5)"/><rect x="6.5" y="18.5" width="8.5" height="6" fill="url(#g5)"/><path d="M7 0.5V24.5" stroke="#f068b8" stroke-width="1.5"/><rect x="15" y="2.5" width="5" height="2" fill="#6e6e6e"/><rect x="15" y="8.5" width="5" height="2" fill="#6e6e6e"/><rect x="15" y="14.5" width="5" height="2" fill="#6e6e6e"/><rect x="15" y="20.5" width="5" height="2" fill="#6e6e6e"/></svg>
<svg style="left:817px;top:325px" width="31" height="27" viewBox="0 0 31 27"><rect x="1.5" y="1.5" width="29" height="25" fill="rgba(0,0,0,0.12)"/><rect x="0.5" y="0.5" width="28" height="24" fill="#fff" stroke="#7f95bb"/><rect x="21" y="1" width="7" height="23" fill="#e9eef6"/><rect x="1" y="1" width="6" height="23" fill="#f6f8fb"/><path d="M0.5 6.5H28.5" stroke="#8fa3c4"/><path d="M0.5 12.5H28.5" stroke="#8fa3c4"/><path d="M0.5 18.5H28.5" stroke="#8fa3c4"/><path d="M6.5 0.5V24.5M21.5 0.5V24.5" stroke="#8fa3c4"/><path d="M6.5 0.5H11V6.5H14.5V12.5H11V18.5H13.5V24.5H6.5Z" fill="#5a7fc4" stroke="#3a5a9a"/><rect x="15" y="2.5" width="5" height="2" fill="#6e6e6e"/><rect x="15" y="8.5" width="5" height="2" fill="#6e6e6e"/><rect x="15" y="14.5" width="5" height="2" fill="#6e6e6e"/><rect x="15" y="20.5" width="5" height="2" fill="#6e6e6e"/></svg>
<svg style="left:857px;top:325px" width="31" height="27" viewBox="0 0 31 27"><rect x="1.5" y="1.5" width="29" height="25" fill="rgba(0,0,0,0.12)"/><rect x="0.5" y="0.5" width="28" height="24" fill="#fff" stroke="#7f95bb"/><rect x="21" y="1" width="7" height="23" fill="#e9eef6"/><rect x="1" y="1" width="6" height="23" fill="#f6f8fb"/><path d="M0.5 6.5H28.5" stroke="#8fa3c4"/><path d="M0.5 12.5H28.5" stroke="#8fa3c4"/><path d="M0.5 18.5H28.5" stroke="#8fa3c4"/><path d="M6.5 0.5V24.5M21.5 0.5V24.5" stroke="#8fa3c4"/><path d="M6.5 0.5H11V6.5H14.5V12.5H11V18.5H13.5V24.5H6.5Z" fill="#5cb870" stroke="#3a8a4a"/><rect x="15" y="2.5" width="5" height="2" fill="#6e6e6e"/><rect x="15" y="8.5" width="5" height="2" fill="#6e6e6e"/><rect x="15" y="14.5" width="5" height="2" fill="#6e6e6e"/><rect x="15" y="20.5" width="5" height="2" fill="#6e6e6e"/></svg>
<svg style="left:897px;top:325px" width="31" height="27" viewBox="0 0 31 27"><rect x="1.5" y="1.5" width="29" height="25" fill="rgba(0,0,0,0.12)"/><rect x="0.5" y="0.5" width="28" height="24" fill="#fff" stroke="#7f95bb"/><rect x="21" y="1" width="7" height="23" fill="#e9eef6"/><rect x="1" y="1" width="6" height="23" fill="#f6f8fb"/><path d="M0.5 6.5H28.5" stroke="#8fa3c4"/><path d="M0.5 12.5H28.5" stroke="#8fa3c4"/><path d="M0.5 18.5H28.5" stroke="#8fa3c4"/><path d="M6.5 0.5V24.5M21.5 0.5V24.5" stroke="#8fa3c4"/><path d="M6.5 0.5H11V6.5H14.5V12.5H11V18.5H13.5V24.5H6.5Z" fill="#f05858" stroke="#c03030"/><rect x="15" y="2.5" width="5" height="2" fill="#6e6e6e"/><rect x="15" y="8.5" width="5" height="2" fill="#6e6e6e"/><rect x="15" y="14.5" width="5" height="2" fill="#6e6e6e"/><rect x="15" y="20.5" width="5" height="2" fill="#6e6e6e"/></svg>
<svg style="left:817px;top:365px" width="31" height="27" viewBox="0 0 31 27"><rect x="1.5" y="1.5" width="29" height="25" fill="rgba(0,0,0,0.12)"/><rect x="0.5" y="0.5" width="28" height="24" fill="#fff" stroke="#7f95bb"/><rect x="21" y="1" width="7" height="23" fill="#e9eef6"/><rect x="1" y="1" width="6" height="23" fill="#f6f8fb"/><path d="M0.5 6.5H28.5" stroke="#8fa3c4"/><path d="M0.5 12.5H28.5" stroke="#8fa3c4"/><path d="M0.5 18.5H28.5" stroke="#8fa3c4"/><path d="M6.5 0.5V24.5M21.5 0.5V24.5" stroke="#8fa3c4"/><path d="M6.5 0.5H11V6.5H14.5V12.5H11V18.5H13.5V24.5H6.5Z" fill="#f8ac20" stroke="#c88010"/><rect x="15" y="2.5" width="5" height="2" fill="#6e6e6e"/><rect x="15" y="8.5" width="5" height="2" fill="#6e6e6e"/><rect x="15" y="14.5" width="5" height="2" fill="#6e6e6e"/><rect x="15" y="20.5" width="5" height="2" fill="#6e6e6e"/></svg>
<svg style="left:857px;top:365px" width="31" height="27" viewBox="0 0 31 27"><rect x="1.5" y="1.5" width="29" height="25" fill="rgba(0,0,0,0.12)"/><rect x="0.5" y="0.5" width="28" height="24" fill="#fff" stroke="#7f95bb"/><rect x="21" y="1" width="7" height="23" fill="#e9eef6"/><rect x="1" y="1" width="6" height="23" fill="#f6f8fb"/><path d="M0.5 6.5H28.5" stroke="#8fa3c4"/><path d="M0.5 12.5H28.5" stroke="#8fa3c4"/><path d="M0.5 18.5H28.5" stroke="#8fa3c4"/><path d="M6.5 0.5V24.5M21.5 0.5V24.5" stroke="#8fa3c4"/><path d="M6.5 0.5H11V6.5H14.5V12.5H11V18.5H13.5V24.5H6.5Z" fill="#1e8ce8" stroke="#1060b0"/><rect x="15" y="2.5" width="5" height="2" fill="#6e6e6e"/><rect x="15" y="8.5" width="5" height="2" fill="#6e6e6e"/><rect x="15" y="14.5" width="5" height="2" fill="#6e6e6e"/><rect x="15" y="20.5" width="5" height="2" fill="#6e6e6e"/></svg>
<svg style="left:897px;top:365px" width="31" height="27" viewBox="0 0 31 27"><rect x="1.5" y="1.5" width="29" height="25" fill="rgba(0,0,0,0.12)"/><rect x="0.5" y="0.5" width="28" height="24" fill="#fff" stroke="#7f95bb"/><rect x="21" y="1" width="7" height="23" fill="#e9eef6"/><rect x="1" y="1" width="6" height="23" fill="#f6f8fb"/><path d="M0.5 6.5H28.5" stroke="#8fa3c4"/><path d="M0.5 12.5H28.5" stroke="#8fa3c4"/><path d="M0.5 18.5H28.5" stroke="#8fa3c4"/><path d="M6.5 0.5V24.5M21.5 0.5V24.5" stroke="#8fa3c4"/><path d="M6.5 0.5H11V6.5H14.5V12.5H11V18.5H13.5V24.5H6.5Z" fill="#f068b8" stroke="#c04088"/><rect x="15" y="2.5" width="5" height="2" fill="#6e6e6e"/><rect x="15" y="8.5" width="5" height="2" fill="#6e6e6e"/><rect x="15" y="14.5" width="5" height="2" fill="#6e6e6e"/><rect x="15" y="20.5" width="5" height="2" fill="#6e6e6e"/></svg>
<div class="a" style="left:91px;top:53px;width:64px;height:42px;border:5px solid #ff0000;border-radius:13px;box-shadow:2px 3px 4px rgba(0,0,0,0.45), inset 2px 3px 4px rgba(0,0,0,0.35)"></div>
<div class="a" style="left:474px;top:78px;width:199px;height:33px;border:5px solid #ff0000;border-radius:12px;box-shadow:2px 3px 4px rgba(0,0,0,0.45), inset 2px 3px 4px rgba(0,0,0,0.35)"></div>
<div class="a" style="left:482px;top:197px;width:223px;height:51px;border:5px solid #ff0000;border-radius:12px;box-shadow:2px 3px 4px rgba(0,0,0,0.45), inset 2px 3px 4px rgba(0,0,0,0.35)"></div>
<div class="a" style="left:802px;top:204px;width:144px;height:216px;border:5px solid #ff0000;border-radius:14px;box-shadow:2px 3px 4px rgba(0,0,0,0.45), inset 2px 3px 4px rgba(0,0,0,0.35)"></div>
<div class="a" style="left:66px;top:75px;width:44px;height:44px;border-radius:50%;background:radial-gradient(circle at 30% 25%,#f9a878 0%,#f47c48 28%,#f25a26 62%,#ff3a00 100%);border:1px solid #c8381a;box-shadow:1px 2px 3px rgba(0,0,0,0.3)"></div>
<svg style="left:66px;top:75px" width="44" height="44" viewBox="0 0 44 44"><text x="22" y="30.5" font-family="Liberation Sans" font-weight="bold" font-size="24" text-anchor="middle" fill="#fff" stroke="#3a3a3a" stroke-width="2" paint-order="stroke" stroke-linejoin="round">1</text></svg>
<div class="a" style="left:436px;top:64px;width:48px;height:48px;border-radius:50%;background:radial-gradient(circle at 30% 25%,#f9a878 0%,#f47c48 28%,#f25a26 62%,#ff3a00 100%);border:1px solid #c8381a;box-shadow:1px 2px 3px rgba(0,0,0,0.3)"></div>
<svg style="left:436px;top:64px" width="48" height="48" viewBox="0 0 48 48"><text x="24" y="32.5" font-family="Liberation Sans" font-weight="bold" font-size="24" text-anchor="middle" fill="#fff" stroke="#3a3a3a" stroke-width="2" paint-order="stroke" stroke-linejoin="round">2</text></svg>
<div class="a" style="left:453px;top:181px;width:44px;height:44px;border-radius:50%;background:radial-gradient(circle at 30% 25%,#f9a878 0%,#f47c48 28%,#f25a26 62%,#ff3a00 100%);border:1px solid #c8381a;box-shadow:1px 2px 3px rgba(0,0,0,0.3)"></div>
<svg style="left:453px;top:181px" width="44" height="44" viewBox="0 0 44 44"><text x="22" y="30.5" font-family="Liberation Sans" font-weight="bold" font-size="24" text-anchor="middle" fill="#fff" stroke="#3a3a3a" stroke-width="2" paint-order="stroke" stroke-linejoin="round">3</text></svg>
<div class="a" style="left:779px;top:397px;width:46px;height:46px;border-radius:50%;background:radial-gradient(circle at 30% 25%,#f9a878 0%,#f47c48 28%,#f25a26 62%,#ff3a00 100%);border:1px solid #c8381a;box-shadow:1px 2px 3px rgba(0,0,0,0.3)"></div>
<svg style="left:779px;top:397px" width="46" height="46" viewBox="0 0 46 46"><text x="23" y="31.5" font-family="Liberation Sans" font-weight="bold" font-size="24" text-anchor="middle" fill="#fff" stroke="#3a3a3a" stroke-width="2" paint-order="stroke" stroke-linejoin="round">4</text></svg>
</body></html>
